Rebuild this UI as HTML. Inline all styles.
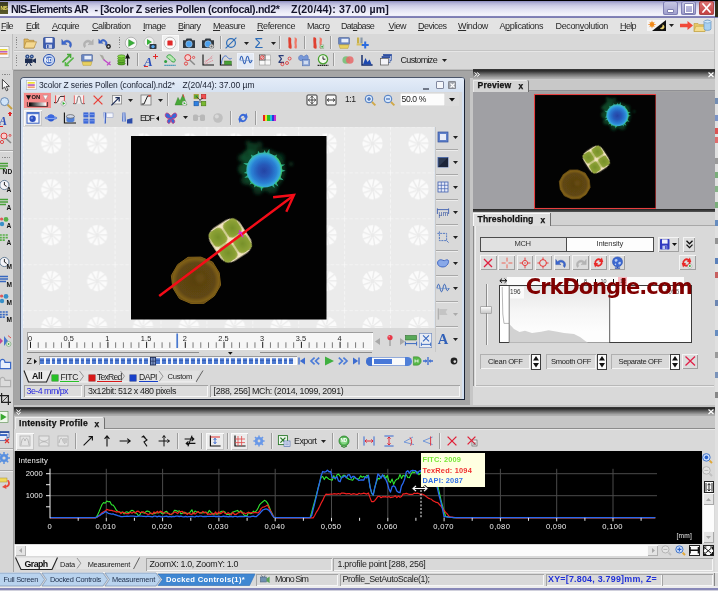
<!DOCTYPE html>
<html><head><meta charset="utf-8"><title>NIS-Elements AR</title>
<style>
html,body{margin:0;padding:0;}
body{width:718px;height:591px;overflow:hidden;position:relative;background:#d6d6d6;font-family:"Liberation Sans",sans-serif;font-size:8px;color:#222;}
.a{position:absolute;}
#w{position:absolute;left:-8px;top:-8px;width:734px;height:607px;overflow:hidden;will-change:transform;filter:blur(.42px);background:#d6d6d6;}
#v{position:absolute;left:8px;top:8px;width:718px;height:591px;}
.t{position:absolute;white-space:pre;line-height:1;}
u{text-decoration:underline;text-underline-offset:1px;}
svg{overflow:visible;}

</style></head><body><div id="w"><div id="v">
<div class="a" style="left:-8px;top:0px;width:734px;height:18px;background:linear-gradient(#000 0,#000 .9px,#8c8cc0 1px,#b4b4d8 3px,#d0d0e8 6px,#e4e4f4 10px,#f2f2fa 14px,#f0f0fa 15.6px,#8484b8 16.4px,#7c7cb2 17.6px,#c0c0d0 18px);"></div>
<div class="a" style="left:-8px;top:2px;width:16px;height:12px;background:linear-gradient(#3a3a20,#5a5a2a);"></div>
<span class="t" style="left:0.5px;top:6.27px;font-size:5px;color:#e8d860;letter-spacing:-0.448px;font-weight:bold;">NIS</span>
<span class="t" style="left:11px;top:3.53px;font-size:10.6px;color:#15152a;letter-spacing:-0.610px;font-weight:bold;">NIS-Elements AR</span>
<span class="t" style="left:94.5px;top:3.53px;font-size:10.6px;color:#15152a;letter-spacing:-0.341px;font-weight:bold;">- [3color Z series Pollen (confocal).nd2*</span>
<span class="t" style="left:291px;top:3.53px;font-size:10.6px;color:#15152a;letter-spacing:0.157px;font-weight:bold;">Z(20/44): 37.00 µm]</span>
<div class="a" style="left:663px;top:1px;width:15px;height:14px;border-radius:2.5px;background:linear-gradient(#c9c9e6,#9d9dcb);box-shadow:inset 0 0 0 1px #7f7fb4;"></div>
<div class="a" style="left:681px;top:1px;width:15px;height:14px;border-radius:2.5px;background:linear-gradient(#c9c9e6,#9d9dcb);box-shadow:inset 0 0 0 1px #7f7fb4;"></div>
<div class="a" style="left:699px;top:1px;width:15px;height:14px;border-radius:2.5px;background:linear-gradient(#e07878,#c23c3c);box-shadow:inset 0 0 0 1px #a84848;"></div>
<div class="a" style="left:668px;top:10px;width:5px;height:2px;background:#fff;box-shadow:0 0 0 .5px #55558c"></div>
<div class="a" style="left:685px;top:4px;width:6px;height:6px;border:1px solid #fff;border-top-width:2px;box-shadow:0 0 0 .5px #55558c"></div>
<svg class="a" style="left:702px;top:3px;" width="9" height="10" viewBox="0 0 9 10"><path d="M1 1L8 9M8 1L1 9" stroke="#fff" stroke-width="1.8" stroke-linecap="round"/></svg>
<div class="a" style="left:715px;top:1px;width:11px;height:16px;background:#2c2c18;"></div>
<div class="a" style="left:-8px;top:18px;width:734px;height:16px;background:#e3e3e3;"></div>
<span class="t" style="left:1px;top:21.88px;font-size:9px;color:#2a2a2a;letter-spacing:-0.629px;"><u>F</u>ile</span>
<span class="t" style="left:26px;top:21.88px;font-size:9px;color:#2a2a2a;letter-spacing:-0.629px;"><u>E</u>dit</span>
<span class="t" style="left:52px;top:21.88px;font-size:9px;color:#2a2a2a;letter-spacing:-0.502px;"><u>A</u>cquire</span>
<span class="t" style="left:92px;top:21.88px;font-size:9px;color:#2a2a2a;letter-spacing:-0.412px;"><u>C</u>alibration</span>
<span class="t" style="left:143px;top:21.88px;font-size:9px;color:#2a2a2a;letter-spacing:-0.503px;"><u>I</u>mage</span>
<span class="t" style="left:178px;top:21.88px;font-size:9px;color:#2a2a2a;letter-spacing:-0.503px;"><u>B</u>inary</span>
<span class="t" style="left:213px;top:21.88px;font-size:9px;color:#2a2a2a;letter-spacing:-0.431px;"><u>M</u>easure</span>
<span class="t" style="left:257px;top:21.88px;font-size:9px;color:#2a2a2a;letter-spacing:-0.392px;"><u>R</u>eference</span>
<span class="t" style="left:307px;top:21.88px;font-size:9px;color:#2a2a2a;letter-spacing:-0.503px;">Macr<u>o</u></span>
<span class="t" style="left:341px;top:21.88px;font-size:9px;color:#2a2a2a;letter-spacing:-0.691px;">Dat<u>a</u>base</span>
<span class="t" style="left:388.5px;top:21.88px;font-size:9px;color:#2a2a2a;letter-spacing:-0.465px;"><u>V</u>iew</span>
<span class="t" style="left:418px;top:21.88px;font-size:9px;color:#2a2a2a;letter-spacing:-0.502px;"><u>D</u>evices</span>
<span class="t" style="left:458px;top:21.88px;font-size:9px;color:#2a2a2a;letter-spacing:-0.336px;"><u>W</u>indow</span>
<span class="t" style="left:499.5px;top:21.88px;font-size:9px;color:#2a2a2a;letter-spacing:-0.419px;">A<u>p</u>plications</span>
<span class="t" style="left:555.5px;top:21.88px;font-size:9px;color:#2a2a2a;letter-spacing:-0.350px;">Decon<u>v</u>olution</span>
<span class="t" style="left:620px;top:21.88px;font-size:9px;color:#2a2a2a;letter-spacing:-0.629px;"><u>H</u>elp</span>
<svg class="a" style="left:647px;top:20px;" width="19" height="11" viewBox="0 0 19 11"><rect width="19" height="11" fill="#f4f4f4"/><path d="M19 0V11H5z" fill="#111"/><circle cx="5" cy="4.5" r="2.4" fill="#f0a020"/><path d="M5 .8v7.4M1.3 4.5h7.4M2.4 1.9l5.2 5.2M7.6 1.9L2.4 7.1" stroke="#f08020" stroke-width=".7"/><path d="M15.5 4.5a2.4 2.4 0 1 1-2.6 3.4a2.6 2.6 0 0 0 2.6-3.4z" fill="#e8d070"/></svg>
<svg class="a" style="left:669px;top:24px;" width="5" height="3" viewBox="0 0 5 3"><path d="M0 0H5L2.5 3z" fill="#222"/></svg>
<svg class="a" style="left:680px;top:21px;" width="13" height="9" viewBox="0 0 13 9"><path d="M0 2.8H7.5V0L13 4.5L7.5 9V6.2H0z" fill="#f04838"/></svg>
<svg class="a" style="left:694px;top:19px;" width="19" height="13" viewBox="0 0 19 13"><path d="M0 4.5h4l1 1.2h6V12.5H0z" fill="#e8c868" stroke="#b89838" stroke-width=".6"/><path d="M0 12.5l1.8-5.2H12l-1.2 5.2z" fill="#f4dc8c" stroke="#b89838" stroke-width=".5"/><rect x="10" y="1.2" width="7" height="10.2" rx="3.4" ry="1.6" fill="#a8d0f0" stroke="#5888b8" stroke-width=".6"/><ellipse cx="13.5" cy="2.6" rx="3.5" ry="1.4" fill="#d0e8fa" stroke="#5888b8" stroke-width=".5"/></svg>
<div class="a" style="left:-8px;top:34px;width:734px;height:36px;background:#d8d8d8;"></div>
<div class="a" style="left:14px;top:50px;width:704px;height:1px;background:#c4c4c4;"></div>
<div class="a" style="left:14px;top:51px;width:704px;height:1px;background:#e6e6e6;"></div>
<div class="a" style="left:0px;top:69px;width:718px;height:1px;background:#bdbdbd;"></div>
<div class="a" style="left:-8px;top:34px;width:21px;height:36px;background:#dcdcdc;"></div>
<div class="a" style="left:12px;top:34px;width:1px;height:36px;background:#bdbdbd;"></div>
<svg class="a" style="left:0px;top:46px;" width="10" height="12" viewBox="0 0 10 12"><rect x="-2" y=".5" width="11" height="11" fill="#fafafa" stroke="#a8a8a8" stroke-width=".7"/><rect x="0" y="3" width="7.5" height="1.6" fill="#e8d838"/><rect x="0" y="5" width="7.5" height="1.6" fill="#c060c0"/><rect x="0" y="7" width="7.5" height="1.6" fill="#e89048"/></svg>
<div class="a" style="left:16px;top:37.0px;width:1.2px;height:1.2px;background:#8a8a8a;"></div>
<div class="a" style="left:16px;top:39.4px;width:1.2px;height:1.2px;background:#8a8a8a;"></div>
<div class="a" style="left:16px;top:41.8px;width:1.2px;height:1.2px;background:#8a8a8a;"></div>
<div class="a" style="left:16px;top:44.2px;width:1.2px;height:1.2px;background:#8a8a8a;"></div>
<div class="a" style="left:16px;top:46.6px;width:1.2px;height:1.2px;background:#8a8a8a;"></div>
<div class="a" style="left:16px;top:55.0px;width:1.2px;height:1.2px;background:#8a8a8a;"></div>
<div class="a" style="left:16px;top:57.4px;width:1.2px;height:1.2px;background:#8a8a8a;"></div>
<div class="a" style="left:16px;top:59.8px;width:1.2px;height:1.2px;background:#8a8a8a;"></div>
<div class="a" style="left:16px;top:62.2px;width:1.2px;height:1.2px;background:#8a8a8a;"></div>
<div class="a" style="left:16px;top:64.6px;width:1.2px;height:1.2px;background:#8a8a8a;"></div>
<div class="a" style="left:118.5px;top:37.0px;width:1.2px;height:1.2px;background:#8a8a8a;"></div>
<div class="a" style="left:118.5px;top:39.4px;width:1.2px;height:1.2px;background:#8a8a8a;"></div>
<div class="a" style="left:118.5px;top:41.8px;width:1.2px;height:1.2px;background:#8a8a8a;"></div>
<div class="a" style="left:118.5px;top:44.2px;width:1.2px;height:1.2px;background:#8a8a8a;"></div>
<div class="a" style="left:118.5px;top:46.6px;width:1.2px;height:1.2px;background:#8a8a8a;"></div>
<svg class="a" style="left:23.0px;top:35.5px" width="14" height="14" viewBox="-7.0 -7.0 14 14"><path d="M-6 -4h4l1 1.3h5V5H-6z" fill="#e0b860" stroke="#a88030" stroke-width=".6"/><path d="M-6 5l2-6.2H6.5L4 5z" fill="#f4d890" stroke="#a88030" stroke-width=".6"/></svg>
<svg class="a" style="left:41.5px;top:35.5px" width="14" height="14" viewBox="-7.0 -7.0 14 14"><rect x="-5.5" y="-5.5" width="11" height="11" rx="1" fill="#3c5cb0" stroke="#24408c" stroke-width=".6"/><rect x="-3.5" y="-5" width="7" height="4.6" fill="#f0f0f8"/><rect x="-3" y="1.5" width="6" height="4" fill="#c8d0e8"/><rect x="-2" y="2" width="1.6" height="3" fill="#3c5cb0"/></svg>
<svg class="a" style="left:60.5px;top:35.5px" width="14" height="14" viewBox="-7.0 -7.0 14 14"><path d="M-4.5 -1.2A4.2 4.2 0 1 1 2.5 4.6L1.3 2.9A2.2 2.2 0 1 0 -2.8 .2L-1 1.6H-6.2V-3.6z" fill="#3c68d0" stroke="#2848a0" stroke-width=".4"/></svg>
<svg class="a" style="left:79.5px;top:35.5px" width="14" height="14" viewBox="-7.0 -7.0 14 14"><g transform="scale(-1,1)"><path d="M-4.5 -1.2A4.2 4.2 0 1 1 2.5 4.6L1.3 2.9A2.2 2.2 0 1 0 -2.8 .2L-1 1.6H-6.2V-3.6z" fill="#b4b4b4" stroke="#a0a0a0" stroke-width=".4"/></g></svg>
<svg class="a" style="left:98.0px;top:35.5px" width="14" height="14" viewBox="-7.0 -7.0 14 14"><g transform="translate(-1,-1) scale(.85)"><path d="M-4.5 -1.2A4.2 4.2 0 1 1 2.5 4.6L1.3 2.9A2.2 2.2 0 1 0 -2.8 .2L-1 1.6H-6.2V-3.6z" fill="#3c68d0" stroke="#2848a0" stroke-width=".4"/></g><circle cx="3.5" cy="3.5" r="2.4" fill="#222"/><circle cx="3.5" cy="3.5" r="1" fill="#ddd"/></svg>
<svg class="a" style="left:124.0px;top:35.5px" width="14" height="14" viewBox="-7.0 -7.0 14 14"><circle r="5.8" fill="#f8f8f8" stroke="#a8a8a8" stroke-width=".8"/><path d="M-2.4 -3.4L3.6 0L-2.4 3.4z" fill="#38b038" stroke="#208020" stroke-width=".4"/></svg>
<svg class="a" style="left:143.0px;top:35.5px" width="14" height="14" viewBox="-7.0 -7.0 14 14"><circle cx="-1" cy="-1" r="5" fill="#f4f4f4" stroke="#b0b0b0" stroke-width=".7"/><path d="M-3 -4L2 -1L-3 2z" fill="#38b038"/><rect x="-.5" y="1" width="7" height="5" rx=".8" fill="#303840"/><circle cx="3" cy="3.6" r="1.7" fill="#58a8f0"/></svg>
<div class="a" style="left:161.5px;top:34.5px;width:17px;height:16px;background:#f0f0f0;box-shadow:inset 0 0 0 1px #fafafa"></div>
<svg class="a" style="left:162.5px;top:35.5px" width="14" height="14" viewBox="-7.0 -7.0 14 14"><circle r="5.8" fill="#fafafa" stroke="#b4b4b4" stroke-width=".8"/><rect x="-2.6" y="-2.6" width="5.2" height="5.2" rx=".6" fill="#e02828"/></svg>
<svg class="a" style="left:181.5px;top:35.5px" width="14" height="14" viewBox="-7.0 -7.0 14 14"><path d="M-6 -2.8h2.6l1-1.8h4.8l1 1.8H6V5H-6z" fill="#303840"/><circle cy="1" r="3.2" fill="#4aa0ee" stroke="#c8d8e8" stroke-width=".5"/></svg>
<svg class="a" style="left:200.5px;top:35.5px" width="14" height="14" viewBox="-7.0 -7.0 14 14"><path d="M-6 -2.8h2.6l1-1.8h4.8l1 1.8H6V5H-6z" fill="#303840"/><circle cy="1" r="3.2" fill="#4aa0ee" stroke="#c8d8e8" stroke-width=".5"/><circle cx="3.5" cy="3.5" r="2.3" fill="#e8e8e8" stroke="#777" stroke-width=".5"/><rect x="2.5" y="2.5" width="2" height="2" fill="#666"/></svg>
<div class="a" style="left:219.5px;top:36px;width:1px;height:13px;background:#9c9c9c;"></div>
<div class="a" style="left:220.5px;top:36px;width:1px;height:13px;background:#ececec;"></div>
<svg class="a" style="left:223.5px;top:35.5px" width="14" height="14" viewBox="-7.0 -7.0 14 14"><circle r="4.4" fill="none" stroke="#2c6cb8" stroke-width="1.2"/><path d="M-5.4 5.4L5.4 -5.4" stroke="#2c6cb8" stroke-width="1.1"/></svg>
<svg class="a" style="left:243.5px;top:41.5px;" width="5" height="3" viewBox="0 0 5 3"><path d="M0 0H5L2.5 3z" fill="#222"/></svg>
<span class="t" style="left:254.5px;top:35.65px;font-size:14px;color:#2c6cb8;letter-spacing:0.344px;">Σ</span>
<svg class="a" style="left:270.5px;top:41.5px;" width="5" height="3" viewBox="0 0 5 3"><path d="M0 0H5L2.5 3z" fill="#222"/></svg>
<div class="a" style="left:279px;top:36px;width:1px;height:13px;background:#9c9c9c;"></div>
<div class="a" style="left:280px;top:36px;width:1px;height:13px;background:#ececec;"></div>
<svg class="a" style="left:286.0px;top:35.5px" width="14" height="14" viewBox="-7.0 -7.0 14 14"><path d="M-4.600 -5.600C-2.400 -5.800 -1.400 -5 -1.800 -2.600C-2.200 0 -1 2 -1.400 5.600C-3 5.800 -4.400 5.600 -4.600 4C-4 1 -5 -1 -4.600 -5.600z" fill="#e04030"/><path d="M1.400 -5.400C3.400 -5.600 4.600 -4 3.800 -1.600C3 .6 4.600 3 3.600 5.400C2.600 5.600 1.600 5.400 1.400 4.400C2.400 2 .8 0 1.600 -2.400C2 -3.600 1.600 -4.600 1.400 -5.400z" fill="#f07868"/></svg>
<div class="a" style="left:304px;top:36px;width:1px;height:13px;background:#9c9c9c;"></div>
<div class="a" style="left:305px;top:36px;width:1px;height:13px;background:#ececec;"></div>
<svg class="a" style="left:311.0px;top:35.5px" width="14" height="14" viewBox="-7.0 -7.0 14 14"><path d="M-4.600 -5.600C-2.400 -5.800 -1.400 -5 -1.800 -2.600C-2.200 0 -1 2 -1.400 5.600C-3 5.800 -4.400 5.600 -4.600 4C-4 1 -5 -1 -4.600 -5.600z" fill="#e04030"/><path d="M1.400 -5.400C3.400 -5.600 4.600 -4 3.800 -1.600C3 .6 4.600 3 3.600 5.400C2.600 5.600 1.600 5.400 1.400 4.400C2.400 2 .8 0 1.600 -2.400C2 -3.600 1.600 -4.600 1.400 -5.400z" fill="#f07868"/><rect x="2.4" y="2" width="3.4" height="3.4" fill="#f0f0f0" stroke="#70a070" stroke-width=".5"/><circle cx="4.1" cy="3.7" r="1" fill="#40a840"/></svg>
<div class="a" style="left:329.5px;top:36px;width:1px;height:13px;background:#9c9c9c;"></div>
<div class="a" style="left:330.5px;top:36px;width:1px;height:13px;background:#ececec;"></div>
<svg class="a" style="left:337.0px;top:35.5px" width="14" height="14" viewBox="-7.0 -7.0 14 14"><rect x="-5.5" y="-5.5" width="11" height="7" rx=".8" fill="#6884c0" stroke="#40588c" stroke-width=".5"/><rect x="-2.6" y="-4.2" width="7" height="3.6" fill="#e8eef8"/><path d="M-5 1.8H5L4 5.4H-4z" fill="#e8d060" stroke="#a89030" stroke-width=".4"/></svg>
<svg class="a" style="left:355.0px;top:35.5px" width="14" height="14" viewBox="-7.0 -7.0 14 14"><rect x="-5" y="-5.5" width="2.2" height="6" fill="#c8b048"/><rect x="-1.6" y="-5.5" width="2.2" height="6" fill="#8898a8"/><path d="M-5.4 .5H1v2H-5.4z" fill="#d8c060"/><path d="M3.2 -1.6v7M-.3 1.9h7" stroke="#2c6ce0" stroke-width="2"/></svg>
<svg class="a" style="left:23.0px;top:53.0px" width="14" height="14" viewBox="-7.0 -7.0 14 14"><circle cx="-2.6" cy="-3.4" r="2.1" fill="#2c4c88"/><circle cx="1.8" cy="-3.6" r="1.9" fill="#2c4c88"/><rect x="-5" y="-1.6" width="7.6" height="4.6" rx=".6" fill="#1c2c50"/><path d="M2.6 -.2L6 -1.8V3.2L2.6 1.6z" fill="#1c2c50"/><path d="M-2.4 3L-4 6M-.4 3L1.4 6" stroke="#1c2c50" stroke-width="1"/><circle cx="-2.6" cy="-3.4" r=".8" fill="#a8c0e8"/><circle cx="1.8" cy="-3.6" r=".7" fill="#a8c0e8"/></svg>
<svg class="a" style="left:41.5px;top:53.0px" width="14" height="14" viewBox="-7.0 -7.0 14 14"><circle r="5.6" fill="#c8d8f4" stroke="#3458b0" stroke-width="1"/><circle r="3.4" fill="#4870c8"/></svg>
<span class="t" style="left:44.6px;top:57.66px;font-size:5.6px;color:#fff;letter-spacing:-0.047px;font-weight:bold;">ND</span>
<svg class="a" style="left:60.5px;top:53.0px" width="14" height="14" viewBox="-7.0 -7.0 14 14"><path d="M-5.600 2.400L2.400 -5.400M-1 -5.600H2.600V-2" stroke="#48a838" stroke-width="1.500" fill="none"/><path d="M5.600 -2.400L-2.400 5.400M1 5.600H-2.600V2" stroke="#58b848" stroke-width="1.500" fill="none"/></svg>
<svg class="a" style="left:79.5px;top:53.0px" width="14" height="14" viewBox="-7.0 -7.0 14 14"><rect x="-5.5" y="-5.5" width="11" height="7" rx=".8" fill="#6884c0" stroke="#40588c" stroke-width=".5"/><rect x="-2.6" y="-4.2" width="7" height="3.6" fill="#e8eef8"/><path d="M-5 1.8H5L4 5.4H-4z" fill="#e8d060" stroke="#a89030" stroke-width=".4"/></svg>
<svg class="a" style="left:98.0px;top:53.0px" width="14" height="14" viewBox="-7.0 -7.0 14 14"><path d="M-5.5 -5.5L-2 -4.4L0 .4L-2.4 -.6z" fill="#a8a8a0"/><path d="M-1.6 -.6L5.6 5M2 5.4L5.4 1.6" stroke="#c048c8" stroke-width="1.3"/></svg>
<svg class="a" style="left:115.5px;top:53.0px" width="14" height="14" viewBox="-7.0 -7.0 14 14"><ellipse cx="-1.6" cy="3.4" rx="3.8" ry="1.6" fill="#58a828" stroke="#2c6810" stroke-width=".5"/><ellipse cx="-1.6" cy="1" rx="3.8" ry="1.6" fill="#68b830" stroke="#2c6810" stroke-width=".5"/><ellipse cx="-1.6" cy="-1.4" rx="3.8" ry="1.6" fill="#78c838" stroke="#2c6810" stroke-width=".5"/><ellipse cx="-1.6" cy="-3.6" rx="3.8" ry="1.6" fill="#88d848" stroke="#2c6810" stroke-width=".5"/><path d="M4.6 5.4V-3M3 -2L4.6 -5.4L6.2 -2z" stroke="#111" stroke-width="1.1" fill="#111"/></svg>
<div class="a" style="left:137px;top:53px;width:1px;height:13px;background:#9c9c9c;"></div>
<div class="a" style="left:138px;top:53px;width:1px;height:13px;background:#ececec;"></div>
<span class="t" style="left:144px;top:54.60px;font-size:13px;color:#2c50b8;font-weight:bold;font-family:'Liberation Serif',serif;font-style:italic;">A</span>
<div class="a" style="left:153px;top:54px;width:5px;height:5px;"><div class="a" style="left:0;top:2px;width:5px;height:1.4px;background:#e02828"></div><div class="a" style="left:1.8px;top:0;width:1.4px;height:5px;background:#e02828"></div></div>
<div class="a" style="left:144px;top:66px;width:4px;height:1.4px;background:#e02828;"></div>
<svg class="a" style="left:162.5px;top:53.0px" width="14" height="14" viewBox="-7.0 -7.0 14 14"><path d="M-1.6 -5C1 -6 2.4 -3 4 -1.6C6 -.4 5.6 2.4 3 2C1 1.6 .4 -.6 -1.6 -1.4C-3.6 -2.4 -3.6 -4.4 -1.6 -5z" fill="#b8e8b0" stroke="#30a040" stroke-width="1"/><circle cx="-4.4" cy="1.6" r="1.5" fill="#30a040"/><path d="M-5.6 5.4H5.6" stroke="#3090b0" stroke-width="1.3" stroke-dasharray="1.4 .6"/></svg>
<svg class="a" style="left:181.5px;top:53.0px" width="14" height="14" viewBox="-7.0 -7.0 14 14"><circle cx="-1.2" cy="-2.4" r="3" fill="#f8d0d0" stroke="#e03838" stroke-width="1"/><circle cx="-3" cy="3.6" r="1.6" fill="none" stroke="#e03838" stroke-width=".9"/><circle cx="4.6" cy="-2.6" r="1.1" fill="none" stroke="#e03838" stroke-width=".8"/><path d="M.8 0L5.8 4.8" stroke="#888" stroke-width="1.5"/></svg>
<svg class="a" style="left:200.5px;top:53.0px" width="14" height="14" viewBox="-7.0 -7.0 14 14"><path d="M-5 -5.6V5H6" stroke="#111" stroke-width="1.1" fill="none"/><path d="M-3.4 3.4L4.6 -4.4M-3.4 1.4L4.6 -2.2M-2.6 4L5 .4" stroke="#e07080" stroke-width=".7" stroke-dasharray="1.2 .6"/></svg>
<svg class="a" style="left:219.0px;top:53.0px" width="14" height="14" viewBox="-7.0 -7.0 14 14"><path d="M-5.6 -5.6V5H6" stroke="#111" stroke-width="1.1" fill="none"/><path d="M-4.8 4C-3.6 -4 -.6 -6 1.8 -2.4C3.2 -.4 4.6 -1 5.6 -1.6" stroke="#3868c8" stroke-width=".9" fill="none"/><rect x="-1.6" y="1" width="7" height="3.6" fill="#48a038" stroke="#286018" stroke-width=".4"/></svg>
<div class="a" style="left:237px;top:52.5px;width:17px;height:16px;background:#e4eaf4;box-shadow:inset 0 0 0 1px #eef2fa"></div>
<svg class="a" style="left:238.5px;top:53.0px" width="14" height="14" viewBox="-7.0 -7.0 14 14"><path d="M-6 0C-5 -5 -4 -5 -3 0C-2 5 -1 5 0 0C1 -5 2 -5 3 0C4 4 5 3 6 0" stroke="#3060b8" stroke-width="1.1" fill="none"/><path d="M-6.4 .6H6.4" stroke="#6088c8" stroke-width=".6"/></svg>
<svg class="a" style="left:258.0px;top:53.0px" width="14" height="14" viewBox="-7.0 -7.0 14 14"><rect x="-5.6" y="-5" width="11.2" height="10" fill="#f8f8f8" stroke="#888" stroke-width=".5"/><path d="M0 -5V5M-5.6 0H5.6" stroke="#888" stroke-width=".6"/><rect x="-5.6" y="-5" width="5.6" height="5" fill="#e8e8e8" stroke="#333" stroke-width=".6"/><circle cx="-2.8" cy="-2.5" r="1.8" fill="none" stroke="#e02828" stroke-width=".8"/><path d="M-4.6 -.6L-1 -4.4" stroke="#e02828" stroke-width=".7"/></svg>
<span class="t" style="left:278px;top:54.11px;font-size:10.5px;color:#283c78;font-weight:bold;">Σ</span>
<svg class="a" style="left:277.5px;top:53.0px" width="14" height="14" viewBox="-7.0 -7.0 14 14"><circle cx="-2.6" cy="4.2" r="1.5" fill="none" stroke="#e03030" stroke-width=".8"/><circle cx="2" cy="3" r="1.5" fill="none" stroke="#e03030" stroke-width=".8"/><circle cx="4.6" cy="-1.4" r="1.5" fill="none" stroke="#e03030" stroke-width=".8"/></svg>
<svg class="a" style="left:296.5px;top:53.0px" width="14" height="14" viewBox="-7.0 -7.0 14 14"><path d="M-5.4 -2.6C-4.6 -5.6 -1 -5 -.6 -3.2C.6 -3.4 1.4 -4.8 2.8 -5.2C4.6 -4.4 4.6 -1 3.8 .6H-1.4C-3.4 1 -5.8 .4 -5.4 -2.6z" fill="#7898d8" stroke="#4868b0" stroke-width=".5"/><rect x="-1.6" y="-.6" width="7" height="6.4" fill="#90a8d8" stroke="#5070b0" stroke-width=".6"/><rect x="-.2" y="1" width="4.2" height="3.2" fill="#d0dcf0"/></svg>
<svg class="a" style="left:315.5px;top:53.0px" width="14" height="14" viewBox="-7.0 -7.0 14 14"><circle cy="-.8" r="4.6" fill="#f4f8f0" stroke="#48a030" stroke-width="1.3"/><path d="M0 -.8V-3.6M0 -.8L2.4 -.8" stroke="#111" stroke-width=".9"/><path d="M-5.4 5.4H5.4" stroke="#222" stroke-width="1.2" stroke-dasharray="1.5 .5"/></svg>
<div class="a" style="left:333px;top:53px;width:1px;height:13px;background:#9c9c9c;"></div>
<div class="a" style="left:334px;top:53px;width:1px;height:13px;background:#ececec;"></div>
<svg class="a" style="left:340.5px;top:53.0px" width="14" height="14" viewBox="-7.0 -7.0 14 14"><circle cx="-1.8" r="3.8" fill="#78c078" opacity=".9"/><circle cx="1.8" r="3.8" fill="#e86868" opacity=".85"/></svg>
<svg class="a" style="left:360.0px;top:53.0px" width="14" height="14" viewBox="-7.0 -7.0 14 14"><path d="M-5 -5V5H5.6" stroke="#102868" stroke-width="1.4" fill="none"/><path d="M-4 4.4L-1.6 -2L.6 2L2.6 -.6L4.6 4.4z" fill="#1c48b0"/></svg>
<svg class="a" style="left:379.0px;top:53.0px" width="14" height="14" viewBox="-7.0 -7.0 14 14"><rect x="-2.4" y="-5.6" width="8" height="6" fill="#e8ecf8" stroke="#3050a0" stroke-width=".7"/><rect x="-2.4" y="-5.6" width="8" height="1.6" fill="#3050a0"/><rect x="-4" y="-3.6" width="8" height="6" fill="#e8ecf8" stroke="#3050a0" stroke-width=".7"/><rect x="-4" y="-3.6" width="8" height="1.6" fill="#3050a0"/><rect x="-5.6" y="-1.4" width="8" height="6.4" fill="#f4f4f8" stroke="#555" stroke-width=".7"/></svg>
<span class="t" style="left:400.5px;top:55.98px;font-size:9px;color:#1c1c1c;letter-spacing:-0.668px;">Customize</span>
<svg class="a" style="left:441.5px;top:59px;" width="5" height="3" viewBox="0 0 5 3"><path d="M0 0H5L2.5 3z" fill="#222"/></svg>
<div class="a" style="left:-8px;top:70px;width:734px;height:502px;background:#a5a5a5;"></div>
<div class="a" style="left:13px;top:69.5px;width:705px;height:1px;background:#8f8f8f;"></div>
<div class="a" style="left:-8px;top:70px;width:21px;height:502px;background:#d6d6d6;"></div>
<div class="a" style="left:13px;top:70px;width:1px;height:502px;background:#a2a2a2;"></div>
<div class="a" style="left:2.0px;top:73.5px;width:1.2px;height:1.2px;background:#8a8a8a;"></div>
<div class="a" style="left:4.4px;top:73.5px;width:1.2px;height:1.2px;background:#8a8a8a;"></div>
<div class="a" style="left:6.8px;top:73.5px;width:1.2px;height:1.2px;background:#8a8a8a;"></div>
<div class="a" style="left:9.2px;top:73.5px;width:1.2px;height:1.2px;background:#8a8a8a;"></div>
<svg class="a" style="left:-1.0px;top:78.0px" width="14" height="14" viewBox="-7.0 -7.0 14 14"><path d="M-3.6 -5.6V4L-1.4 2L.4 5.8L2 5L.2 1.4H3.4z" fill="#f8f8f8" stroke="#222" stroke-width=".8"/></svg>
<svg class="a" style="left:-1.5px;top:96.0px" width="14" height="14" viewBox="-7.0 -7.0 14 14"><circle cx="-1.4" cy="-1.4" r="4" fill="#d0e4f8" stroke="#6888b0" stroke-width="1"/><path d="M1.6 1.8L6 6" stroke="#c8a040" stroke-width="2"/></svg>
<span class="t" style="left:-1px;top:114.84px;font-size:12px;color:#2c50b8;font-weight:bold;font-family:'Liberation Serif',serif;font-style:italic;">A</span>
<div class="a" style="left:8px;top:113px;width:4px;height:1.2px;background:#e02828;"></div>
<div class="a" style="left:9.4px;top:111.6px;width:1.2px;height:4px;background:#e02828;"></div>
<div class="a" style="left:-1px;top:126px;width:4px;height:1.3px;background:#e02828;"></div>
<svg class="a" style="left:-2.0px;top:131.0px" width="14" height="14" viewBox="-7.0 -7.0 14 14"><circle cx="-1" cy="-2" r="3" fill="#f8d0d0" stroke="#e03838" stroke-width="1"/><circle cx="-3" cy="4" r="1.6" fill="none" stroke="#e03838" stroke-width=".9"/><circle cx="5" cy="-2.6" r="1" fill="none" stroke="#e03838" stroke-width=".8"/><path d="M1 .4L6 5" stroke="#888" stroke-width="1.5"/></svg>
<div class="a" style="left:0px;top:150px;width:13px;height:1px;background:#a8a8a8;"></div>
<div class="a" style="left:0px;top:151px;width:13px;height:1px;background:#ececec;"></div>
<div class="a" style="left:2.0px;top:157px;width:1.2px;height:1.2px;background:#8a8a8a;"></div>
<div class="a" style="left:4.4px;top:157px;width:1.2px;height:1.2px;background:#8a8a8a;"></div>
<div class="a" style="left:6.8px;top:157px;width:1.2px;height:1.2px;background:#8a8a8a;"></div>
<div class="a" style="left:9.2px;top:157px;width:1.2px;height:1.2px;background:#8a8a8a;"></div>
<svg class="a" style="left:-2.5px;top:161.0px" width="14" height="14" viewBox="-7.0 -7.0 14 14"><path d="M-5 -4.6H3M-5 -2H3M-5 .6H1" stroke="#48a038" stroke-width="1.5"/></svg>
<span class="t" style="left:6.6px;top:168.81px;font-size:6.6px;color:#111;font-weight:bold;"></span>
<span class="t" style="left:2.6px;top:169.01px;font-size:6.6px;color:#111;letter-spacing:0.234px;font-weight:bold;">ND</span>
<div class="a" style="left:0px;top:160.5px;width:11px;height:7px;background:#58a848;opacity:.0"></div>
<svg class="a" style="left:-2.5px;top:179.0px" width="14" height="14" viewBox="-7.0 -7.0 14 14"><circle cx="-.6" cy="-1" r="4.6" fill="#f4f4f8" stroke="#688098" stroke-width="1"/><path d="M-.6 -1V-4M-.6 -1L1.6 .4" stroke="#111" stroke-width=".9"/></svg>
<span class="t" style="left:6.6px;top:186.81px;font-size:6.6px;color:#111;font-weight:bold;">A</span>
<svg class="a" style="left:-2.5px;top:197.0px" width="14" height="14" viewBox="-7.0 -7.0 14 14"><path d="M-5 -4.6H3M-5 -2H3M-5 .6H1" stroke="#48a038" stroke-width="1.5"/></svg>
<span class="t" style="left:6.6px;top:204.81px;font-size:6.6px;color:#111;font-weight:bold;">A</span>
<svg class="a" style="left:-2.5px;top:215.0px" width="14" height="14" viewBox="-7.0 -7.0 14 14"><circle cx="-3" cy="2" r="2.2" fill="#3890c8"/><circle cx="1" cy="-2.6" r="2.4" fill="#58b048"/><circle cx="-3.4" cy="-3" r="1.6" fill="#e05858"/></svg>
<span class="t" style="left:6.6px;top:222.81px;font-size:6.6px;color:#111;font-weight:bold;">A</span>
<svg class="a" style="left:-2.5px;top:232.0px" width="14" height="14" viewBox="-7.0 -7.0 14 14"><path d="M-5.4 -4H3.4M-5.4 -1.4H3.4M-5.4 1.2H.6" stroke="#58b048" stroke-width="1.7" stroke-dasharray="2.2 .8"/></svg>
<span class="t" style="left:6.6px;top:239.81px;font-size:6.6px;color:#111;font-weight:bold;">A</span>
<svg class="a" style="left:-2.5px;top:256.0px" width="14" height="14" viewBox="-7.0 -7.0 14 14"><circle cx="-.6" cy="-1" r="4.6" fill="#f4f4f8" stroke="#688098" stroke-width="1"/><path d="M-.6 -1V-4M-.6 -1L1.6 .4" stroke="#111" stroke-width=".9"/></svg>
<span class="t" style="left:6.6px;top:263.81px;font-size:6.6px;color:#111;font-weight:bold;">M</span>
<svg class="a" style="left:-2.5px;top:274.0px" width="14" height="14" viewBox="-7.0 -7.0 14 14"><path d="M-5 -4.6H3M-5 -2H3M-5 .6H1" stroke="#3868c0" stroke-width="1.5"/></svg>
<span class="t" style="left:6.6px;top:281.81px;font-size:6.6px;color:#111;font-weight:bold;">M</span>
<svg class="a" style="left:-2.5px;top:292.0px" width="14" height="14" viewBox="-7.0 -7.0 14 14"><circle cx="-3" cy="2" r="2.2" fill="#3890c8"/><circle cx="1" cy="-2.6" r="2.4" fill="#3890c8"/><circle cx="-3.4" cy="-3" r="1.6" fill="#e05858"/></svg>
<span class="t" style="left:6.6px;top:299.81px;font-size:6.6px;color:#111;font-weight:bold;">M</span>
<svg class="a" style="left:-2.5px;top:309.0px" width="14" height="14" viewBox="-7.0 -7.0 14 14"><path d="M-5.4 -4H3.4M-5.4 -1.4H3.4M-5.4 1.2H.6" stroke="#3868c0" stroke-width="1.7" stroke-dasharray="2.2 .8"/></svg>
<span class="t" style="left:6.6px;top:316.81px;font-size:6.6px;color:#111;font-weight:bold;">M</span>
<svg class="a" style="left:-2.0px;top:334.0px" width="14" height="14" viewBox="-7.0 -7.0 14 14"><path d="M-6 -4L-2 0L-6 4z" fill="#c04898"/><path d="M-1 -5L3 0L-1 5z" fill="#4878d0"/><circle cx="3.6" cy="3" r="2.4" fill="#f0f0f0" stroke="#60a060" stroke-width=".6"/><path d="M2.8 1.8L5 3L2.8 4.2z" fill="#38a838"/><path d="M3 -5.4L6 -3" stroke="#e05050" stroke-width="1"/></svg>
<svg class="a" style="left:-2.0px;top:357.0px" width="14" height="14" viewBox="-7.0 -7.0 14 14"><path d="M-5 -1.6C-5 -5.6 0 -5.6 0 -1.6H5.6V4.6H-5z" fill="#e8f0fc" stroke="#3868c8" stroke-width="1.2"/></svg>
<svg class="a" style="left:-2.0px;top:375.0px" width="14" height="14" viewBox="-7.0 -7.0 14 14"><path d="M-5 -1.6C-5 -5.6 0 -5.6 0 -1.6H5.6V4.6H-5z" fill="#dcdcdc" stroke="#b0b0b0" stroke-width="1.2"/></svg>
<svg class="a" style="left:-2.0px;top:392.0px" width="14" height="14" viewBox="-7.0 -7.0 14 14"><path d="M-3.4 -6V3.4H6M-6 -3.4H3.4V6" stroke="#222" stroke-width="1.2" fill="none"/><path d="M-3 3L3 -3" stroke="#222" stroke-width=".8"/></svg>
<svg class="a" style="left:-3.0px;top:410.0px" width="14" height="14" viewBox="-7.0 -7.0 14 14"><rect x="-6" y="-5.6" width="10" height="11.2" fill="#f0f8ec" stroke="#689860" stroke-width=".7"/><path d="M-3.4 -3.6L2.6 0L-3.4 3.6z" fill="#38a830"/></svg>
<svg class="a" style="left:-3.0px;top:430.0px" width="14" height="14" viewBox="-7.0 -7.0 14 14"><rect x="-4" y="-5.6" width="9" height="6" fill="#e8ecf8" stroke="#3050a0" stroke-width=".7"/><rect x="-4" y="-5.6" width="9" height="1.6" fill="#3050a0"/><rect x="-6" y="-2.6" width="9" height="6" fill="#e8ecf8" stroke="#3050a0" stroke-width=".7"/><rect x="-6" y="-2.6" width="9" height="1.6" fill="#3868c8"/><path d="M1 2L5 6M5 2L1 6" stroke="#e03030" stroke-width="1.1"/></svg>
<div class="a" style="left:0px;top:448px;width:13px;height:1px;background:#a8a8a8;"></div>
<div class="a" style="left:0px;top:449px;width:13px;height:1px;background:#ececec;"></div>
<svg class="a" style="left:-3.5px;top:451.0px" width="14" height="14" viewBox="-7.0 -7.0 14 14"><circle r="3" fill="none" stroke="#5890e0" stroke-width="2.2"/><path d="M0 -6V6M-6 0H6M-4.2 -4.2L4.2 4.2M4.2 -4.2L-4.2 4.2" stroke="#5890e0" stroke-width="1.5"/><circle r="1.6" fill="#d6d6d6"/></svg>
<div class="a" style="left:0px;top:470px;width:13px;height:1px;background:#a8a8a8;"></div>
<div class="a" style="left:0px;top:471px;width:13px;height:1px;background:#ececec;"></div>
<svg class="a" style="left:-2.0px;top:476.0px" width="14" height="14" viewBox="-7.0 -7.0 14 14"><rect x="-6" y="-5" width="8" height="4" fill="#f0d858" stroke="#a89030" stroke-width=".5"/><path d="M3.6 -3C6 0 5 4 1 4.6L1.6 6L-3 4L1 1.2L1.2 2.8C3.6 2 3.6 -.6 2 -2.4z" fill="#e84838"/></svg>
<div class="a" style="left:715px;top:70px;width:11px;height:502px;background:#e0e0e0;"></div>
<div class="a" style="left:715px;top:18px;width:11px;height:52px;background:#e4e4e4;"></div>
<div class="a" style="left:714px;top:18px;width:1px;height:52px;background:#c0c0c0;"></div>
<div class="a" style="left:715px;top:98px;width:3px;height:6px;background:#5878a8;opacity:.8"></div>
<div class="a" style="left:715px;top:115px;width:3px;height:6px;background:#6080c0;opacity:.8"></div>
<div class="a" style="left:715px;top:128px;width:3px;height:6px;background:#d83030;opacity:.8"></div>
<div class="a" style="left:715px;top:137px;width:3px;height:6px;background:#e05050;opacity:.8"></div>
<div class="a" style="left:715px;top:158px;width:3px;height:6px;background:#888;opacity:.8"></div>
<div class="a" style="left:715px;top:172px;width:3px;height:6px;background:#60a060;opacity:.8"></div>
<div class="a" style="left:715px;top:186px;width:3px;height:6px;background:#70a870;opacity:.8"></div>
<div class="a" style="left:715px;top:202px;width:3px;height:6px;background:#60a060;opacity:.8"></div>
<div class="a" style="left:715px;top:220px;width:3px;height:6px;background:#4878b8;opacity:.8"></div>
<div class="a" style="left:715px;top:238px;width:3px;height:6px;background:#808080;opacity:.8"></div>
<div class="a" style="left:715px;top:258px;width:3px;height:6px;background:#3868b0;opacity:.8"></div>
<div class="a" style="left:715px;top:272px;width:3px;height:6px;background:#c04040;opacity:.8"></div>
<div class="a" style="left:715px;top:300px;width:3px;height:6px;background:#5070a8;opacity:.8"></div>
<div class="a" style="left:715px;top:330px;width:3px;height:6px;background:#4878b8;opacity:.8"></div>
<div class="a" style="left:715px;top:352px;width:3px;height:6px;background:#888;opacity:.8"></div>
<div class="a" style="left:715px;top:372px;width:3px;height:6px;background:#6080b0;opacity:.8"></div>
<div class="a" style="left:715px;top:392px;width:3px;height:6px;background:#707070;opacity:.8"></div>
<div class="a" style="left:20px;top:76.5px;width:444.5px;height:323.2px;background:#d3e0f2;border-radius:4px 4px 0 0;box-shadow:inset 1px 1px 0 #4a5468, inset -1px -1px 0 #1a2234;"></div>
<div class="a" style="left:21px;top:77.5px;width:442.5px;height:14px;background:linear-gradient(#e4ecf8,#d6e2f2);border-radius:3px 3px 0 0;"></div>
<svg class="a" style="left:25.5px;top:79.5px;" width="10.5" height="10" viewBox="0 0 10.5 10"><rect x=".3" y=".3" width="9.9" height="9.4" fill="#fcfcfc" stroke="#a8b0b8" stroke-width=".6"/><rect x="1.6" y="2" width="7.2" height="1.7" fill="#f0e030"/><rect x="1.6" y="4.2" width="7.2" height="1.7" fill="#b860c0"/><rect x="1.6" y="6.4" width="7.2" height="1.7" fill="#f0a070"/></svg>
<span class="t" style="left:39px;top:81.10px;font-size:8.5px;color:#1a2030;letter-spacing:-0.139px;">3color Z series Pollen (confocal).nd2*</span>
<span class="t" style="left:182.5px;top:81.10px;font-size:8.5px;color:#1a2030;letter-spacing:-0.026px;">Z(20/44): 37.00 µm</span>
<div class="a" style="left:423px;top:87.5px;width:6px;height:2px;background:#707888;"></div>
<div class="a" style="left:435.5px;top:81px;width:6px;height:6px;border:1px solid #8088a0;border-top-width:1.6px;background:#f4f6fa;border-radius:1px"></div>
<div class="a" style="left:448px;top:81px;width:8px;height:8px;background:#a0a4ac;border-radius:1.5px;box-shadow:inset 0 0 0 .8px #80848c"></div>
<svg class="a" style="left:449.5px;top:82.5px;" width="5" height="5" viewBox="0 0 5 5"><path d="M.5 .5L4.5 4.5M4.5 .5L.5 4.5" stroke="#fff" stroke-width="1.2"/></svg>
<div class="a" style="left:23px;top:91.5px;width:439px;height:35px;background:#d9d9d9;"></div>
<div class="a" style="left:23.5px;top:92.5px;width:27px;height:15px;background:#f58a8a;"></div>
<svg class="a" style="left:23.5px;top:92.5px;" width="27" height="15" viewBox="0 0 27 15"><path d="M2 2.2H7L4.5 7z" fill="#111"/><path d="M19 2.2H24L21.5 7z" fill="#fff" stroke="#888" stroke-width=".4"/><rect x="5" y="9.4" width="17" height="3.6" fill="url(#ongr)"/><path d="M3.4 9V13.4H23.6V9" stroke="#111" stroke-width=".7" fill="none"/><defs><linearGradient id="ongr"><stop offset="0" stop-color="#000"/><stop offset="1" stop-color="#fff"/></linearGradient></defs></svg>
<span class="t" style="left:31.5px;top:95.29px;font-size:5.8px;color:#111;letter-spacing:-0.102px;font-weight:bold;">ON</span>
<svg class="a" style="left:53.0px;top:92.6px" width="14" height="14" viewBox="-7.0 -7.0 14 14"><rect x="-4.6" y="-5" width="9.2" height="8" fill="#f4e4e4"/><path d="M-6 2.6H-3.6C-1.6 2.6 -1.6 -3.6 1 -3.6H5" stroke="#111" stroke-width=".9" fill="none"/><path d="M-4.4 -4.6V3.4M4.4 -4.6V3.4" stroke="#e83838" stroke-width=".9"/><circle cx="3.6" cy="3.4" r="2.6" fill="#f4f4f4" stroke="#888" stroke-width=".5"/><path d="M2.6 1.8L5.2 3.4L2.6 5z" fill="#28a828"/></svg>
<svg class="a" style="left:71.5px;top:92.6px" width="14" height="14" viewBox="-7.0 -7.0 14 14"><rect x="-4.6" y="-5" width="9.2" height="8" fill="#f4e4e4"/><path d="M-5.6 3.6H-3C-1.6 3.6 -2 -4 0 -4C2 -4 1.6 3.6 3 3.6H5.6" stroke="#111" stroke-width=".9" fill="none"/><path d="M-4.6 -4.6V4M4.6 -4.6V4" stroke="#e83838" stroke-width=".9"/><rect x="-4.6" y="-5" width="9.2" height="9" fill="#fff" opacity=".35"/></svg>
<svg class="a" style="left:90.5px;top:92.6px" width="14" height="14" viewBox="-7.0 -7.0 14 14"><path d="M-4.4 -4.4L4.4 4.4M4.4 -4.4L-4.4 4.4" stroke="#e84038" stroke-width="1.3"/></svg>
<svg class="a" style="left:110.0px;top:92.6px" width="14" height="14" viewBox="-7.0 -7.0 14 14"><rect x="-4.6" y="-4.6" width="9.2" height="8.6" fill="#f4f4f4" stroke="#888" stroke-width=".8"/><path d="M-5.6 5.4L1.6 -1.8M-1.6 -2.4H2.2V1.4" stroke="#1c2c58" stroke-width="1.2" fill="none"/></svg>
<svg class="a" style="left:128px;top:98.5px;" width="5" height="3" viewBox="0 0 5 3"><path d="M0 0H5L2.5 3z" fill="#222"/></svg>
<svg class="a" style="left:138.5px;top:92.6px" width="14" height="14" viewBox="-7.0 -7.0 14 14"><rect x="-5" y="-5" width="10" height="10" fill="#f0f0f0" stroke="#777" stroke-width=".8"/><path d="M-4.4 4H-2L1.6 -4H4.6" stroke="#222" stroke-width="1" fill="none"/><path d="M2.4 -4.2H4.6" stroke="#e84838" stroke-width="1.4"/></svg>
<svg class="a" style="left:157.5px;top:98.5px;" width="5" height="3" viewBox="0 0 5 3"><path d="M0 0H5L2.5 3z" fill="#222"/></svg>
<div class="a" style="left:167px;top:93px;width:1px;height:13px;background:#9c9c9c;"></div>
<div class="a" style="left:168px;top:93px;width:1px;height:13px;background:#ececec;"></div>
<svg class="a" style="left:174.0px;top:92.6px" width="14" height="14" viewBox="-7.0 -7.0 14 14"><path d="M-6 5L-3 -2.6L-1 1L2 -5.6L6 5z" fill="#48a838" stroke="#287818" stroke-width=".4"/><path d="M2 -5.6L3 -2.6" stroke="#e04040" stroke-width="1"/><circle cx="3.4" cy="3.2" r="2.3" fill="#f0f0f0" stroke="#888" stroke-width=".4"/><path d="M2.6 2L4.8 3.2L2.6 4.4z" fill="#28a828"/></svg>
<svg class="a" style="left:193.0px;top:92.6px" width="14" height="14" viewBox="-7.0 -7.0 14 14"><rect x="-6" y="-5.6" width="4.4" height="4.4" fill="#58a838" stroke="#b89020" stroke-width=".6"/><rect x="1.4" y="-5.6" width="4.4" height="4.4" fill="#f05050" stroke="#c02020" stroke-width=".6"/><rect x="-6" y="1.4" width="4.4" height="4.4" fill="#3080e0" stroke="#1050a0" stroke-width=".6"/><rect x="1.4" y="1.4" width="4.4" height="4.4" fill="#78b830" stroke="#487810" stroke-width=".6"/><path d="M-3.6 -3.4L0 0V3M0 0L3 -2" stroke="#222" stroke-width=".7" fill="none"/></svg>
<svg class="a" style="left:305.0px;top:92.6px" width="14" height="14" viewBox="-7.0 -7.0 14 14"><rect x="-5" y="-5" width="10" height="10" rx="1" fill="#f8f8f8" stroke="#222" stroke-width=".9"/><path d="M0 -3.6V3.6M-3.6 0H3.6M-1.4 -2.2L0 -3.8L1.4 -2.2M-1.4 2.2L0 3.8L1.4 2.2M-2.2 -1.4L-3.8 0L-2.2 1.4M2.2 -1.4L3.8 0L2.2 1.4" stroke="#222" stroke-width=".8" fill="none"/></svg>
<svg class="a" style="left:324.0px;top:92.6px" width="14" height="14" viewBox="-7.0 -7.0 14 14"><rect x="-5" y="-5" width="10" height="10" rx="1" fill="#f8f8f8" stroke="#222" stroke-width=".9"/><path d="M-3.6 0H3.6M-2 -1.6L-3.8 0L-2 1.6M2 -1.6L3.8 0L2 1.6" stroke="#222" stroke-width=".9" fill="none"/></svg>
<span class="t" style="left:345px;top:95.12px;font-size:8.6px;color:#222;letter-spacing:-0.484px;">1:1</span>
<svg class="a" style="left:362.5px;top:92.6px" width="14" height="14" viewBox="-7.0 -7.0 14 14"><circle cx="-1" cy="-1" r="3.8" fill="#d8e8fc" stroke="#4878c0" stroke-width="1"/><path d="M2 2L5.4 5.4" stroke="#d0a848" stroke-width="1.8"/><path d="M-3 -1H1" stroke="#2858a8" stroke-width="1"/><path d="M-1 -3V1" stroke="#2858a8" stroke-width="1"/></svg>
<svg class="a" style="left:381.5px;top:92.6px" width="14" height="14" viewBox="-7.0 -7.0 14 14"><circle cx="-1" cy="-1" r="3.8" fill="#d8e8fc" stroke="#4878c0" stroke-width="1"/><path d="M2 2L5.4 5.4" stroke="#d0a848" stroke-width="1.8"/><path d="M-3 -1H1" stroke="#2858a8" stroke-width="1"/></svg>
<div class="a" style="left:399.5px;top:93px;width:45px;height:13px;background:#fcfcfc;box-shadow:inset 0 0 0 .5px #d0d0d0"></div>
<span class="t" style="left:401.5px;top:95.12px;font-size:8.6px;color:#222;letter-spacing:-0.378px;">50.0 %</span>
<div class="a" style="left:445px;top:93px;width:14px;height:13px;background:#dcdcdc;"></div>
<svg class="a" style="left:448.5px;top:98px;" width="6" height="3.5" viewBox="0 0 6 3.5"><path d="M0 0H6L3 3.5z" fill="#111"/></svg>
<div class="a" style="left:23.5px;top:109.5px;width:18px;height:16.5px;background:#ececec;box-shadow:inset 1px 1px 0 #fafafa, inset -1px -1px 0 #c8c8c8"></div>
<svg class="a" style="left:25.5px;top:110.5px" width="14" height="14" viewBox="-7.0 -7.0 14 14"><rect x="-6" y="-5.4" width="12" height="10.6" fill="#f4f6fc" stroke="#3860c0" stroke-width="1"/><rect x="-6" y="-5.4" width="12" height="1.6" fill="#5078d0"/><circle cx="-.4" cy=".8" r="3.2" fill="#2c50c0"/><circle cx="-1.2" cy="0" r="1.2" fill="#6c8ce0"/></svg>
<svg class="a" style="left:44.0px;top:110.5px" width="14" height="14" viewBox="-7.0 -7.0 14 14"><circle r="3.4" fill="#2c58d0"/><ellipse rx="6" ry="1.5" fill="#88a8f0" stroke="#2c58d0" stroke-width=".6"/><path d="M-3.4 0A3.4 3.4 0 0 1 3.4 0z" fill="#3c68e0"/></svg>
<svg class="a" style="left:63.0px;top:110.5px" width="14" height="14" viewBox="-7.0 -7.0 14 14"><path d="M-5.6 -5.6V5H6" stroke="#111" stroke-width="1.1" fill="none"/><path d="M-3.6 -1.6V2.4A4 1.8 0 0 0 4.4 2.4V-1.6z" fill="#5080d8"/><ellipse cx=".4" cy="-1.6" rx="4" ry="1.8" fill="#d0d8e8" stroke="#444" stroke-width=".6"/></svg>
<svg class="a" style="left:82.0px;top:110.5px" width="14" height="14" viewBox="-7.0 -7.0 14 14"><rect x="-5.6" y="-5.6" width="5" height="5" fill="#3c68d8"/><rect x=".6" y="-5.6" width="5" height="5" fill="#3c68d8"/><rect x="-5.6" y=".6" width="5" height="5" fill="#3c68d8"/><rect x=".6" y=".6" width="5" height="5" fill="#3c68d8"/><path d="M-5.6 -3.4H-.6M.6 -3.4H5.6M-5.6 2.8H-.6M.6 2.8H5.6" stroke="#7898e8" stroke-width="1"/></svg>
<svg class="a" style="left:101.0px;top:110.5px" width="14" height="14" viewBox="-7.0 -7.0 14 14"><path d="M-4.6 -5.6H-2V5.6H-3.6z" fill="#4868c0"/><path d="M-4.6 -5.6H-3V5.6H-3.6z" fill="#b8c8f0"/><rect x="-1.6" y="-5" width="6.6" height="4.4" fill="#f4f6fc" stroke="#8898c8" stroke-width=".5"/></svg>
<svg class="a" style="left:120.0px;top:110.5px" width="14" height="14" viewBox="-7.0 -7.0 14 14"><path d="M-4.6 -5.6H-1.6L-1 3.6H-5z" fill="#5878c8"/><path d="M-3.6 -5.6H-2.6L-2.4 3.6H-3.8z" fill="#c8d4f4"/><path d="M0 5.6V1.6L5.4 0V5.6z" fill="#2c4ca8"/></svg>
<span class="t" style="left:140px;top:113.55px;font-size:8.8px;color:#222;letter-spacing:-1.370px;">EDF</span>
<svg class="a" style="left:155.5px;top:115.5px;" width="3" height="5" viewBox="0 0 3 5"><path d="M3 0V5L0 2.5z" fill="#111"/></svg>
<svg class="a" style="left:164.0px;top:110.5px" width="14" height="14" viewBox="-7.0 -7.0 14 14"><path d="M0 -1C-2 -6 -6.4 -6 -5.6 -2C-5 0 -3 .6 -1 .4C-4 1 -4.6 5 -2 5.4C-.6 5 0 3 0 1C0 3 .6 5 2 5.4C4.6 5 4 1 1 .4C3 .6 5 0 5.6 -2C6.4 -6 2 -6 0 -1z" fill="#3868d8" stroke="#c83878" stroke-width=".9"/></svg>
<svg class="a" style="left:182.5px;top:116px;" width="5" height="3" viewBox="0 0 5 3"><path d="M0 0H5L2.5 3z" fill="#222"/></svg>
<svg class="a" style="left:191.5px;top:110.5px" width="14" height="14" viewBox="-7.0 -7.0 14 14"><rect x="-6" y="-3.6" width="5" height="6.6" rx="1.6" fill="#b8b8b8"/><rect x="1" y="-3.6" width="5" height="6.6" rx="1.6" fill="#b8b8b8"/><path d="M-1.6 -1C-.6 -2 .6 -2 1.6 -1" stroke="#b8b8b8" stroke-width="1" fill="none"/></svg>
<svg class="a" style="left:211.0px;top:110.5px" width="14" height="14" viewBox="-7.0 -7.0 14 14"><circle r="4.8" fill="#c0c0c0"/><circle cx="-1.2" cy="-1.4" r="2" fill="#d8d8d8"/></svg>
<div class="a" style="left:229.5px;top:110.5px;width:1px;height:14px;background:#9c9c9c;"></div>
<div class="a" style="left:230.5px;top:110.5px;width:1px;height:14px;background:#ececec;"></div>
<svg class="a" style="left:236.0px;top:110.5px" width="14" height="14" viewBox="-7.0 -7.0 14 14"><path d="M-4 1A4.2 4.2 0 0 1 2.4 -3.4L3.4 -5L4.8 -.6L.4 -.4L1.4 -1.8A2.4 2.4 0 0 0 -2.2 1z" fill="#3868d8"/><path d="M4 -1A4.2 4.2 0 0 1 -2.4 3.4L-3.4 5L-4.8 .6L-.4 .4L-1.4 1.8A2.4 2.4 0 0 0 2.2 -1z" fill="#3868d8"/></svg>
<div class="a" style="left:255px;top:110.5px;width:1px;height:14px;background:#9c9c9c;"></div>
<div class="a" style="left:256px;top:110.5px;width:1px;height:14px;background:#ececec;"></div>
<div class="a" style="left:263px;top:114.5px;width:13px;height:6.5px;background:linear-gradient(90deg,#e82020 0,#e82020 16%,#f0e020 16%,#f0e020 32%,#28c028 32%,#28c028 50%,#20c0d8 50%,#20c0d8 66%,#2838e0 66%,#2838e0 84%,#c828d0 84%);"></div>
<svg class="a" style="left:23px;top:126.5px;" width="411.5" height="201.5" viewBox="0 0 411.5 201.5"><defs><pattern id="ap" x="-0.2" y="-0.5" width="45.9" height="45.9" patternUnits="userSpaceOnUse"><rect width="45.9" height="45.9" fill="#ebebeb"/><path d="M0 0H45.9M0 0V45.9" stroke="#fcfcfc" stroke-width="1.2" stroke-dasharray="3.4 2"/><g transform="translate(28.5,17)"><circle r="10.2" fill="#fbfbfb"/><path d="M0 -2.6L1.6 -10.6" stroke="#ebebeb" stroke-width="1.4" transform="rotate(0)"/><path d="M0 -2.6L1.6 -10.6" stroke="#ebebeb" stroke-width="1.4" transform="rotate(40)"/><path d="M0 -2.6L1.6 -10.6" stroke="#ebebeb" stroke-width="1.4" transform="rotate(80)"/><path d="M0 -2.6L1.6 -10.6" stroke="#ebebeb" stroke-width="1.4" transform="rotate(120)"/><path d="M0 -2.6L1.6 -10.6" stroke="#ebebeb" stroke-width="1.4" transform="rotate(160)"/><path d="M0 -2.6L1.6 -10.6" stroke="#ebebeb" stroke-width="1.4" transform="rotate(200)"/><path d="M0 -2.6L1.6 -10.6" stroke="#ebebeb" stroke-width="1.4" transform="rotate(240)"/><path d="M0 -2.6L1.6 -10.6" stroke="#ebebeb" stroke-width="1.4" transform="rotate(280)"/><path d="M0 -2.6L1.6 -10.6" stroke="#ebebeb" stroke-width="1.4" transform="rotate(320)"/><circle r="2.4" fill="#ebebeb"/></g></pattern></defs><rect width="411.5" height="201.5" fill="url(#ap)"/></svg>
<svg class="a" style="left:131px;top:136px;overflow:hidden;" width="195.5" height="183.5" viewBox="0 0 195.5 183.5"><defs>
<radialGradient id="gB" cx=".5" cy=".52" r=".5"><stop offset="0" stop-color="#2444a4"/><stop offset=".35" stop-color="#2658b8"/><stop offset=".7" stop-color="#2a80d4"/><stop offset=".9" stop-color="#36a8dc"/><stop offset="1" stop-color="#38b8b0"/></radialGradient>
<radialGradient id="gG" cx=".5" cy=".5" r=".5"><stop offset="0" stop-color="#0e5030" stop-opacity=".95"/><stop offset=".65" stop-color="#0c4428" stop-opacity=".8"/><stop offset="1" stop-color="#062010" stop-opacity="0"/></radialGradient>
<radialGradient id="gO" cx=".5" cy=".5" r=".5"><stop offset="0" stop-color="#584110"/><stop offset=".75" stop-color="#604712"/><stop offset=".93" stop-color="#806018"/><stop offset="1" stop-color="#684c12"/></radialGradient>
<radialGradient id="gY" cx=".5" cy=".5" r=".6"><stop offset="0" stop-color="#76902a"/><stop offset=".7" stop-color="#8aa034"/><stop offset="1" stop-color="#a4b048"/></radialGradient>
<filter id="bl1" x="-20%" y="-20%" width="140%" height="140%"><feGaussianBlur stdDeviation=".7"/></filter>
<filter id="bl2" x="-30%" y="-30%" width="160%" height="160%"><feGaussianBlur stdDeviation="1.6"/></filter>
</defs><rect width="195.5" height="183.5" fill="#020202"/><g filter="url(#bl2)"><circle cx="133.0" cy="34.0" r="21.5" fill="#0f5530" opacity="0.5"/><circle cx="118.0" cy="21.0" r="7.5" fill="#0f5530" opacity="0.75"/><circle cx="113.0" cy="33.0" r="6" fill="#0f5530" opacity="0.7"/><circle cx="121.0" cy="12.0" r="5.5" fill="#0f5530" opacity="0.65"/><circle cx="115.0" cy="44.0" r="5" fill="#0f5530" opacity="0.6"/><circle cx="128.0" cy="9.0" r="3.5" fill="#0f5530" opacity="0.5"/><circle cx="111.0" cy="22.0" r="4" fill="#0f5530" opacity="0.6"/><circle cx="141.0" cy="52.0" r="6" fill="#0f5530" opacity="0.45"/><circle cx="127.0" cy="54.0" r="5" fill="#0f5530" opacity="0.45"/><circle cx="149.0" cy="22.0" r="5" fill="#0f5530" opacity="0.4"/><circle cx="160.0" cy="28.0" r="2" fill="#0f5530" opacity="0.6"/><circle cx="117.0" cy="7.0" r="2.5" fill="#0f5530" opacity="0.5"/></g><path d="M149.1 32.8L154.6 34.8L148.9 36.4zM148.0 39.8L152.6 44.2L146.4 43.0zM144.8 44.9L147.4 50.6L142.1 47.3zM142.7 46.9L143.6 52.0L139.6 48.7zM132.6 50.1L130.2 55.2L129.1 49.6zM126.7 48.8L123.1 51.5L123.6 47.1zM123.1 46.7L118.7 48.6L120.5 44.2zM118.8 41.6L113.3 41.8L117.5 38.3zM117.4 38.1L112.9 37.0L116.9 34.6zM117.3 30.5L112.2 26.9L118.4 27.2zM121.3 23.0L119.9 18.6L124.0 20.7zM126.5 19.3L127.0 14.8L129.9 18.2zM131.8 17.9L133.7 13.9L135.3 18.1zM135.1 18.0L138.3 12.8L138.6 18.9zM141.9 20.6L146.1 18.4L144.6 22.9zM148.1 28.4L154.2 28.6L148.9 31.8z" fill="#30b890" opacity=".9" filter="url(#bl1)"/><circle cx="133.0" cy="34.0" r="17.6" fill="url(#gB)" filter="url(#bl1)"/><path d="M143.9 20.2A17.6 17.6 0 0 1 143.9 47.8" stroke="#40d078" stroke-width="1.3" fill="none" opacity=".8" filter="url(#bl1)"/><path d="M132.5 51.6A17.6 17.6 0 0 1 118.9 44.5" stroke="#38c870" stroke-width="1.2" fill="none" opacity=".7" filter="url(#bl1)"/><path d="M89.6 149.1L83.3 160.0L73.0 167.3L60.1 167.5L48.4 162.5L41.8 151.8L40.4 139.5L46.7 128.6L57.0 121.3L69.9 121.1L81.6 126.1L88.2 136.8z" fill="url(#gO)" stroke="#806018" stroke-width="1" stroke-linejoin="round" filter="url(#bl1)"/><circle cx="69.0" cy="142.3" r="4.5" fill="#6c5014" opacity=".7" filter="url(#bl2)"/><g transform="translate(99.3,104.5) rotate(-33)" filter="url(#bl1)"><rect x="-17.8" y="-19.400" width="35.600" height="38.800" rx="11" ry="11" fill="#f2e4c0"/><rect x="-16.4" y="-18.0" width="15.8" height="17.4" rx="5" ry="5" fill="url(#gY)"/><rect x="0.5999999999999996" y="-18.0" width="15.8" height="17.4" rx="5" ry="5" fill="url(#gY)"/><rect x="-16.4" y="0.6000000000000014" width="15.8" height="17.4" rx="5" ry="5" fill="url(#gY)"/><rect x="0.5999999999999996" y="0.6000000000000014" width="15.8" height="17.4" rx="5" ry="5" fill="url(#gY)"/></g><path d="M28.2 160.0L162.0 59.9" stroke="#f40c18" stroke-width="2.5"/><path d="M142.1 61.2L163.0 59.0L155.3 75.7" stroke="#f40c18" stroke-width="2.4" fill="none" stroke-linejoin="miter"/><path d="M108.0 94.4L112.2 101.1M107.0 97.9L111.5 96.0" stroke="#e020e0" stroke-width="1.1"/></svg>
<div class="a" style="left:434.5px;top:126.5px;width:27.5px;height:226px;background:#d9d9d9;"></div>
<div class="a" style="left:434.5px;top:126.5px;width:1px;height:226px;background:#c8c8c8;"></div>
<svg class="a" style="left:453px;top:135.5px;" width="5" height="3" viewBox="0 0 5 3"><path d="M0 0H5L2.5 3z" fill="#222"/></svg>
<div class="a" style="left:436px;top:148.5px;width:22px;height:1px;background:#a8a8a8;"></div>
<div class="a" style="left:436px;top:149.5px;width:22px;height:1px;background:#ececec;"></div>
<svg class="a" style="left:453px;top:160.5px;" width="5" height="3" viewBox="0 0 5 3"><path d="M0 0H5L2.5 3z" fill="#222"/></svg>
<div class="a" style="left:436px;top:173.5px;width:22px;height:1px;background:#a8a8a8;"></div>
<div class="a" style="left:436px;top:174.5px;width:22px;height:1px;background:#ececec;"></div>
<svg class="a" style="left:453px;top:185.5px;" width="5" height="3" viewBox="0 0 5 3"><path d="M0 0H5L2.5 3z" fill="#222"/></svg>
<div class="a" style="left:436px;top:198.5px;width:22px;height:1px;background:#a8a8a8;"></div>
<div class="a" style="left:436px;top:199.5px;width:22px;height:1px;background:#ececec;"></div>
<svg class="a" style="left:453px;top:210.5px;" width="5" height="3" viewBox="0 0 5 3"><path d="M0 0H5L2.5 3z" fill="#222"/></svg>
<div class="a" style="left:436px;top:224px;width:22px;height:1px;background:#a8a8a8;"></div>
<div class="a" style="left:436px;top:225px;width:22px;height:1px;background:#ececec;"></div>
<svg class="a" style="left:453px;top:236px;" width="5" height="3" viewBox="0 0 5 3"><path d="M0 0H5L2.5 3z" fill="#222"/></svg>
<div class="a" style="left:436px;top:249.5px;width:22px;height:1px;background:#a8a8a8;"></div>
<div class="a" style="left:436px;top:250.5px;width:22px;height:1px;background:#ececec;"></div>
<svg class="a" style="left:453px;top:261.5px;" width="5" height="3" viewBox="0 0 5 3"><path d="M0 0H5L2.5 3z" fill="#222"/></svg>
<div class="a" style="left:436px;top:275px;width:22px;height:1px;background:#a8a8a8;"></div>
<div class="a" style="left:436px;top:276px;width:22px;height:1px;background:#ececec;"></div>
<svg class="a" style="left:453px;top:287px;" width="5" height="3" viewBox="0 0 5 3"><path d="M0 0H5L2.5 3z" fill="#222"/></svg>
<div class="a" style="left:436px;top:300.5px;width:22px;height:1px;background:#a8a8a8;"></div>
<div class="a" style="left:436px;top:301.5px;width:22px;height:1px;background:#ececec;"></div>
<svg class="a" style="left:453px;top:312.5px;" width="5" height="3" viewBox="0 0 5 3"><path d="M0 0H5L2.5 3z" fill="#aaa"/></svg>
<div class="a" style="left:436px;top:326px;width:22px;height:1px;background:#a8a8a8;"></div>
<div class="a" style="left:436px;top:327px;width:22px;height:1px;background:#ececec;"></div>
<svg class="a" style="left:453px;top:338px;" width="5" height="3" viewBox="0 0 5 3"><path d="M0 0H5L2.5 3z" fill="#222"/></svg>
<svg class="a" style="left:435.8px;top:129.5px" width="14" height="14" viewBox="-7.0 -7.0 14 14"><rect x="-5" y="-5" width="10" height="10" fill="#6080c8" stroke="#3050a0" stroke-width=".7"/><rect x="-3" y="-3" width="6" height="6" fill="#e8ecf8"/></svg>
<svg class="a" style="left:435.8px;top:154.5px" width="14" height="14" viewBox="-7.0 -7.0 14 14"><rect x="-5" y="-4.6" width="10" height="9.6" fill="#2c3850" stroke="#4868b0" stroke-width=".8"/><path d="M-5 5L5 -4.6V5z" fill="#1c2438"/></svg>
<svg class="a" style="left:435.8px;top:179.5px" width="14" height="14" viewBox="-7.0 -7.0 14 14"><rect x="-5" y="-5" width="10" height="10" fill="#e8ecf8" stroke="#4060b0" stroke-width=".8"/><path d="M-1.7 -5V5M1.7 -5V5M-5 -1.7H5M-5 1.7H5" stroke="#4060b0" stroke-width=".7"/></svg>
<svg class="a" style="left:435.8px;top:204.5px" width="14" height="14" viewBox="-7.0 -7.0 14 14"><path d="M-5.6 -3.6V2M5.6 -3.6V2M-5.6 -2.4H5.6" stroke="#4060b0" stroke-width=".9" fill="none"/></svg>
<span class="t" style="left:438.5px;top:211.08px;font-size:6.4px;color:#3050a0;letter-spacing:0.492px;">µm</span>
<svg class="a" style="left:435.8px;top:230.0px" width="14" height="14" viewBox="-7.0 -7.0 14 14"><path d="M-5.6 -3.6H3.6V3.6H-3.6V-5.6" stroke="#4870c0" stroke-width=".9" fill="none" stroke-dasharray="2 .8"/><path d="M3.6 3.6L5.6 5.6" stroke="#4870c0" stroke-width=".9"/></svg>
<svg class="a" style="left:435.8px;top:255.5px" width="14" height="14" viewBox="-7.0 -7.0 14 14"><path d="M-5.4 0C-5.4 -3 -2.4 -4 0 -2.6C2 -1.6 3 -4 5 -3C6.4 -1.6 5 2 2.4 3.4C0 4.6 -5.4 4 -5.4 0z" fill="#88a8e8" stroke="#3860c0" stroke-width=".9"/></svg>
<svg class="a" style="left:435.8px;top:281.0px" width="14" height="14" viewBox="-7.0 -7.0 14 14"><path d="M-6 0C-5 -5 -4 -5 -3 0C-2 5 -1 5 0 0C1 -5 2 -5 3 0C4 4 5 3 6 0" stroke="#3060b8" stroke-width="1" fill="none"/><path d="M-6.4 .6H6.4" stroke="#6088c8" stroke-width=".6"/></svg>
<svg class="a" style="left:435.8px;top:306.5px" width="14" height="14" viewBox="-7.0 -7.0 14 14"><path d="M-4.6 -5.6V5.6" stroke="#b0b0b0" stroke-width="1.4"/><path d="M-3.6 -5H4.6L2.6 -2L4.6 1H-3.6z" fill="#c4c4c4"/></svg>
<div class="a" style="left:23px;top:328px;width:411.5px;height:71px;background:#d9d9d9;"></div>
<div class="a" style="left:434.5px;top:352px;width:27.5px;height:47px;background:#d9d9d9;"></div>
<span class="t" style="left:437.8px;top:332.33px;font-size:14.5px;color:#3060b8;font-weight:bold;font-family:'Liberation Serif',serif;">A</span>
<div class="a" style="left:26.5px;top:332px;width:346px;height:17.6px;background:#f6f6f6;box-shadow:inset 1px 1px 0 #9c9c9c, inset -1px -1px 0 #fff"></div>
<svg class="a" style="left:26.5px;top:332px;" width="346" height="18.5" viewBox="0 0 346 18.5"><path d="M11.24 10.300V15.900M18.98 10.300V15.900M26.72 10.300V15.900M34.46 10.300V15.900M49.94 10.300V15.900M57.68 10.300V15.900M65.42 10.300V15.900M73.16 10.300V15.900M88.64 10.300V15.900M96.38 10.300V15.900M104.12 10.300V15.900M111.86 10.300V15.900M127.34 10.300V15.900M135.08 10.300V15.900M142.82 10.300V15.900M150.56 10.300V15.900M166.04 10.300V15.900M173.78 10.300V15.900M181.52 10.300V15.900M189.26 10.300V15.900M204.74 10.300V15.900M212.48 10.300V15.900M220.22 10.300V15.900M227.96 10.300V15.900M243.44 10.300V15.900M251.18 10.300V15.900M258.92 10.300V15.900M266.66 10.300V15.900M282.14 10.300V15.900M289.88 10.300V15.900M297.62 10.300V15.900M305.36 10.300V15.900M320.84 10.300V15.900M328.58 10.300V15.900M336.32 10.300V15.900" stroke="#6c6c6c" stroke-width=".9"/><path d="M3.50 9.800V15.900M42.20 9.800V15.900M80.90 9.800V15.900M119.60 9.800V15.900M158.30 9.800V15.900M197.00 9.800V15.900M235.70 9.800V15.900M274.40 9.800V15.900M313.10 9.800V15.900" stroke="#1c1c1c" stroke-width="1"/><path d="M150.200 1.500V16" stroke="#4878d0" stroke-width="1.700"/></svg>
<span class="t" style="left:27.9px;top:335.34px;font-size:7.4px;color:#222;letter-spacing:0.075px;">0</span>
<span class="t" style="left:63.45px;top:335.34px;font-size:7.4px;color:#222;letter-spacing:0.073px;">0.5</span>
<span class="t" style="left:105.30000000000001px;top:335.34px;font-size:7.4px;color:#222;letter-spacing:0.075px;">1</span>
<span class="t" style="left:140.85000000000002px;top:335.34px;font-size:7.4px;color:#222;letter-spacing:0.073px;">1.5</span>
<span class="t" style="left:182.70000000000002px;top:335.34px;font-size:7.4px;color:#222;letter-spacing:0.075px;">2</span>
<span class="t" style="left:218.25px;top:335.34px;font-size:7.4px;color:#222;letter-spacing:0.073px;">2.5</span>
<span class="t" style="left:260.1px;top:335.34px;font-size:7.4px;color:#222;letter-spacing:0.075px;">3</span>
<span class="t" style="left:295.65000000000003px;top:335.34px;font-size:7.4px;color:#222;letter-spacing:0.073px;">3.5</span>
<span class="t" style="left:337.5px;top:335.34px;font-size:7.4px;color:#222;letter-spacing:0.075px;">4</span>
<svg class="a" style="left:374.5px;top:337.5px;" width="5" height="7" viewBox="0 0 5 7"><path d="M5 0V7L0 3.5z" fill="#a8a8a8"/></svg>
<svg class="a" style="left:382.5px;top:333.0px" width="14" height="14" viewBox="-7.0 -7.0 14 14"><circle cy="-2.4" r="2.6" fill="#e83848"/><path d="M0 0V6" stroke="#888" stroke-width="1"/><circle cx="-.8" cy="-3.2" r=".8" fill="#f8a0a8"/></svg>
<svg class="a" style="left:399.5px;top:337.5px;" width="5" height="7" viewBox="0 0 5 7"><path d="M0 0V7L5 3.5z" fill="#a8a8a8"/></svg>
<svg class="a" style="left:404.0px;top:333.0px" width="14" height="14" viewBox="-7.0 -7.0 14 14"><rect x="-5.6" y="-4.6" width="11.2" height="4.6" fill="#58a858" stroke="#286828" stroke-width=".5"/><path d="M-5.6 3.6H5.6M-5.6 1.6V5.6M5.6 1.6V5.6" stroke="#3868c0" stroke-width="1"/></svg>
<div class="a" style="left:418.5px;top:333px;width:13.5px;height:15px;background:#e8ecf4;box-shadow:inset 0 0 0 .7px #7890c0"></div>
<svg class="a" style="left:418.5px;top:333.0px" width="14" height="14" viewBox="-7.0 -7.0 14 14"><path d="M-3 -4.6L3 1.4M3 -4.6L-3 1.4" stroke="#3868c0" stroke-width="1.1"/><path d="M-4.6 4.4H4.6M-4.6 2.6V6M4.6 2.6V6" stroke="#3868c0" stroke-width=".9"/></svg>
<svg class="a" style="left:227.8px;top:352px;" width="4.6" height="2.8" viewBox="0 0 4.6 2.8"><path d="M0 0H4.6L2.3 2.8z" fill="#111"/></svg>
<div class="a" style="left:26.5px;top:351.8px;width:172px;height:1px;background:#8c8c8c;"></div>
<div class="a" style="left:260px;top:351.8px;width:112px;height:1px;background:#8c8c8c;"></div>
<span class="t" style="left:26.5px;top:356.85px;font-size:8.8px;color:#222;">Z</span>
<svg class="a" style="left:33.5px;top:358.5px;" width="3" height="5" viewBox="0 0 3 5"><path d="M0 0V5L3 2.5z" fill="#111"/></svg>
<div class="a" style="left:38.5px;top:356.3px;width:258px;height:9.2px;background:#f2f5fb;box-shadow:inset 1px 1px 0 #9a9a9a, inset -1px -1px 0 #fff"></div>
<div class="a" style="left:40.4px;top:357.8px;width:253.4px;height:6.2px;background:repeating-linear-gradient(90deg,#4c79d0 0,#4c79d0 3.8px,transparent 3.8px,transparent 5.8px);"></div>
<div class="a" style="left:40.4px;top:360.3px;width:253.4px;height:1.2px;background:repeating-linear-gradient(90deg,#3660b8 0,#3660b8 3.8px,transparent 3.8px,transparent 5.8px);"></div>
<div class="a" style="left:40.4px;top:357.8px;width:253.4px;height:1.4px;background:repeating-linear-gradient(90deg,#7c9ce0 0,#7c9ce0 3.8px,transparent 3.8px,transparent 5.8px);"></div>
<svg class="a" style="left:149.6px;top:356.8px;" width="6" height="8.4" viewBox="0 0 6 8.4"><rect x=".4" y=".4" width="5.2" height="7.6" fill="#7c94c4" stroke="#1c2c58" stroke-width=".9"/><path d="M.4 4.200H5.600M3 .4V8" stroke="#1c2c58" stroke-width=".7"/></svg>
<svg class="a" style="left:297.0px;top:356.2px" width="10" height="10" viewBox="-5.0 -5.0 10 10"><path d="M-3 -3.6V3.6" stroke="#3c6cd0" stroke-width="1.4"/><path d="M3 -3.6V3.6L-2.2 0z" fill="#3c6cd0"/></svg>
<svg class="a" style="left:310.0px;top:356.2px" width="10" height="10" viewBox="-5.0 -5.0 10 10"><path d="M-.4 -3.400L-4 0L-.4 3.400M4.200 -3.400L.6 0L4.200 3.400" stroke="#4c7cd8" stroke-width="1.700" fill="none"/></svg>
<svg class="a" style="left:324.0px;top:356.2px" width="10" height="10" viewBox="-5.0 -5.0 10 10"><path d="M-4 -4.600V4.600L5 0z" fill="#40b040"/></svg>
<svg class="a" style="left:337.5px;top:356.2px" width="10" height="10" viewBox="-5.0 -5.0 10 10"><path d="M.4 -3.400L4 0L.4 3.400M-4.200 -3.400L-.6 0L-4.200 3.400" stroke="#4c7cd8" stroke-width="1.700" fill="none"/></svg>
<svg class="a" style="left:351.0px;top:356.2px" width="10" height="10" viewBox="-5.0 -5.0 10 10"><path d="M3 -3.6V3.6" stroke="#3c6cd0" stroke-width="1.4"/><path d="M-3 -3.6V3.6L2.2 0z" fill="#3c6cd0"/></svg>
<div class="a" style="left:366px;top:357px;width:44px;height:9px;background:#fafafa;border-radius:4.5px;box-shadow:inset 0 0 0 .8px #7090d0"></div>
<div class="a" style="left:366px;top:357px;width:6px;height:9px;background:#4070d0;border-radius:4.5px 0 0 4.5px"></div>
<div class="a" style="left:374px;top:359px;width:18px;height:5px;background:#4878d8;"></div>
<div class="a" style="left:405px;top:357px;width:7px;height:9px;background:#5080d8;border-radius:0 4.5px 4.5px 0"></div>
<svg class="a" style="left:412.0px;top:356.2px" width="10" height="10" viewBox="-5.0 -5.0 10 10"><path d="M-3.6 -4.2H0A4.2 4.2 0 0 1 0 4.2H-3.6z" fill="#58b848" stroke="#2c8020" stroke-width=".5"/><path d="M-2 -1.6V1.6M-2 0H1M1 -1.6V1.6" stroke="#fff" stroke-width=".8"/></svg>
<svg class="a" style="left:422.5px;top:356.2px" width="10" height="10" viewBox="-5.0 -5.0 10 10"><path d="M0 -4V4M-5 0H-1.4M5 0H1.4" stroke="#3c6cd0" stroke-width="1.3"/><path d="M-2.6 -2L-.6 0L-2.6 2zM2.6 -2L.6 0L2.6 2z" fill="#3c6cd0"/></svg>
<svg class="a" style="left:449.0px;top:356.2px" width="10" height="10" viewBox="-5.0 -5.0 10 10"><circle r="3.4" fill="#222"/><circle cx=".8" cy=".6" r="1.3" fill="#ddd"/></svg>
<svg class="a" style="left:23px;top:369.5px;" width="200" height="13" viewBox="0 0 200 13"><path d="M28 .5H177.500L172 12H28z" fill="#e2e2e2"/><path d="M56.5 1L60.5 6.2L56.500 11.500M97.500 1L101.500 6.200L97.500 11.500M136 1L140 6.200L136 11.500" stroke="#8c8c8c" stroke-width=".9" fill="none"/><path d="M180 .5L173 12" stroke="#555" stroke-width=".9" fill="none"/><path d="M28 12H173" stroke="#f4f4f4" stroke-width="1"/><path d="M1 .5L5.500 12H23.500L28.500 .5" fill="#ececec" stroke="#222" stroke-width="1.1"/></svg>
<span class="t" style="left:32px;top:372.05px;font-size:8.8px;color:#111;letter-spacing:-0.250px;font-weight:bold;">All</span>
<div class="a" style="left:52px;top:374.5px;width:6px;height:6px;background:#28c028;box-shadow:0 0 0 .5px #188018"></div>
<span class="t" style="left:60.5px;top:372.72px;font-size:8.6px;color:#222;letter-spacing:-0.398px;">FITC</span>
<div class="a" style="left:60px;top:381.3px;width:18.5px;height:1.2px;background:#28c028;"></div>
<div class="a" style="left:88.5px;top:374.5px;width:6px;height:6px;background:#d81818;box-shadow:0 0 0 .5px #901010"></div>
<span class="t" style="left:97px;top:372.72px;font-size:8.6px;color:#222;letter-spacing:-0.773px;">TexRed</span>
<div class="a" style="left:96.5px;top:381.3px;width:25.5px;height:1.2px;background:#d81818;"></div>
<div class="a" style="left:130px;top:374.5px;width:6px;height:6px;background:#1840c8;box-shadow:0 0 0 .5px #102880"></div>
<span class="t" style="left:139px;top:372.72px;font-size:8.6px;color:#222;letter-spacing:-0.516px;">DAPI</span>
<div class="a" style="left:138.5px;top:381.3px;width:19px;height:1.2px;background:#1840c8;"></div>
<span class="t" style="left:167.5px;top:373.07px;font-size:7.6px;color:#222;letter-spacing:-0.279px;">Custom</span>
<div class="a" style="left:24px;top:384.5px;width:58px;height:12.5px;background:#dcdcdc;box-shadow:inset 1px 1px 0 #a4a4a4, inset -1px -1px 0 #f6f6f6"></div>
<div class="a" style="left:84px;top:384.5px;width:124px;height:12.5px;background:#dcdcdc;box-shadow:inset 1px 1px 0 #a4a4a4, inset -1px -1px 0 #f6f6f6"></div>
<div class="a" style="left:210px;top:384.5px;width:250px;height:12.5px;background:#dcdcdc;box-shadow:inset 1px 1px 0 #a4a4a4, inset -1px -1px 0 #f6f6f6"></div>
<span class="t" style="left:26.5px;top:387.27px;font-size:8.9px;color:#2828e0;letter-spacing:-0.536px;">3e-4 mm/px</span>
<span class="t" style="left:88px;top:387.27px;font-size:8.9px;color:#222;letter-spacing:-0.388px;">3x12bit: 512 x 480 pixels</span>
<span class="t" style="left:213.5px;top:387.27px;font-size:8.9px;color:#222;letter-spacing:-0.312px;">[288, 256] MCh: (2014, 1099, 2091)</span>
<div class="a" style="left:470px;top:78px;width:2.6px;height:326.5px;background:#c6c6c6;"></div>
<div class="a" style="left:472.5px;top:69.2px;width:242.29999999999995px;height:10px;background:linear-gradient(#3a3a3a,#2a2a2a 18%,#727272 55%,#a8a8a8 88%,#b4b4b4);"></div>
<svg class="a" style="left:474px;top:71.5px;" width="6" height="5" viewBox="0 0 6 5"><path d="M.5 .5L3 2.5L.5 4.5M3 .5L5.5 2.5L3 4.5" stroke="#fff" stroke-width="1" fill="none"/></svg>
<svg class="a" style="left:707.5px;top:71.5px;" width="6" height="5.5" viewBox="0 0 6 5.5"><path d="M.5 .5L5.5 5M5.5 .5L.5 5" stroke="#fff" stroke-width="1.2"/></svg>
<div class="a" style="left:472.5px;top:79.2px;width:242.29999999999995px;height:12.3px;background:#c8c8c8;"></div>
<div class="a" style="left:472.5px;top:90.4px;width:242.29999999999995px;height:1.1px;background:#909094;"></div>
<div class="a" style="left:472.5px;top:79.5px;width:55.5px;height:12px;background:#d4d4d4;border-radius:0 2px 0 0;box-shadow:inset 1px 1px 0 #e8e8e8, 1px 0 0 #6c6c6c;"></div>
<span class="t" style="left:477.5px;top:80.92px;font-size:8.6px;color:#111;letter-spacing:0.214px;font-weight:bold;-webkit-text-stroke:.25px #111;">Preview</span>
<span class="t" style="left:518.5px;top:81.89px;font-size:8.4px;color:#111;letter-spacing:0.128px;font-weight:bold;-webkit-text-stroke:.25px #111;">x</span>
<div class="a" style="left:472.5px;top:91.5px;width:242.29999999999995px;height:117.5px;background:#a0a0a4;"></div>
<svg class="a" style="left:533.5px;top:93.5px;overflow:hidden;" width="122.5" height="115.0" viewBox="0 0 122.5 115.0"><rect width="122.5" height="115.0" fill="#030303"/><g transform="scale(0.6266 0.6267)"><g filter="url(#bl2)"><circle cx="133.0" cy="34.0" r="21.5" fill="#0f5530" opacity="0.5"/><circle cx="118.0" cy="21.0" r="7.5" fill="#0f5530" opacity="0.75"/><circle cx="113.0" cy="33.0" r="6" fill="#0f5530" opacity="0.7"/><circle cx="121.0" cy="12.0" r="5.5" fill="#0f5530" opacity="0.65"/><circle cx="115.0" cy="44.0" r="5" fill="#0f5530" opacity="0.6"/><circle cx="128.0" cy="9.0" r="3.5" fill="#0f5530" opacity="0.5"/><circle cx="111.0" cy="22.0" r="4" fill="#0f5530" opacity="0.6"/><circle cx="141.0" cy="52.0" r="6" fill="#0f5530" opacity="0.45"/><circle cx="127.0" cy="54.0" r="5" fill="#0f5530" opacity="0.45"/><circle cx="149.0" cy="22.0" r="5" fill="#0f5530" opacity="0.4"/><circle cx="160.0" cy="28.0" r="2" fill="#0f5530" opacity="0.6"/><circle cx="117.0" cy="7.0" r="2.5" fill="#0f5530" opacity="0.5"/></g><path d="M149.1 32.8L154.6 34.8L148.9 36.4zM148.0 39.8L152.6 44.2L146.4 43.0zM144.8 44.9L147.4 50.6L142.1 47.3zM142.7 46.9L143.6 52.0L139.6 48.7zM132.6 50.1L130.2 55.2L129.1 49.6zM126.7 48.8L123.1 51.5L123.6 47.1zM123.1 46.7L118.7 48.6L120.5 44.2zM118.8 41.6L113.3 41.8L117.5 38.3zM117.4 38.1L112.9 37.0L116.9 34.6zM117.3 30.5L112.2 26.9L118.4 27.2zM121.3 23.0L119.9 18.6L124.0 20.7zM126.5 19.3L127.0 14.8L129.9 18.2zM131.8 17.9L133.7 13.9L135.3 18.1zM135.1 18.0L138.3 12.8L138.6 18.9zM141.9 20.6L146.1 18.4L144.6 22.9zM148.1 28.4L154.2 28.6L148.9 31.8z" fill="#30b890" opacity=".9" filter="url(#bl1)"/><circle cx="133.0" cy="34.0" r="17.6" fill="url(#gB)" filter="url(#bl1)"/><path d="M143.9 20.2A17.6 17.6 0 0 1 143.9 47.8" stroke="#40d078" stroke-width="1.3" fill="none" opacity=".8" filter="url(#bl1)"/><path d="M132.5 51.6A17.6 17.6 0 0 1 118.9 44.5" stroke="#38c870" stroke-width="1.2" fill="none" opacity=".7" filter="url(#bl1)"/><path d="M89.6 149.1L83.3 160.0L73.0 167.3L60.1 167.5L48.4 162.5L41.8 151.8L40.4 139.5L46.7 128.6L57.0 121.3L69.9 121.1L81.6 126.1L88.2 136.8z" fill="url(#gO)" stroke="#806018" stroke-width="1" stroke-linejoin="round" filter="url(#bl1)"/><circle cx="69.0" cy="142.3" r="4.5" fill="#6c5014" opacity=".7" filter="url(#bl2)"/><g transform="translate(99.3,104.5) rotate(-33)" filter="url(#bl1)"><rect x="-17.8" y="-19.400" width="35.600" height="38.800" rx="11" ry="11" fill="#f2e4c0"/><rect x="-16.4" y="-18.0" width="15.8" height="17.4" rx="5" ry="5" fill="url(#gY)"/><rect x="0.5999999999999996" y="-18.0" width="15.8" height="17.4" rx="5" ry="5" fill="url(#gY)"/><rect x="-16.4" y="0.6000000000000014" width="15.8" height="17.4" rx="5" ry="5" fill="url(#gY)"/><rect x="0.5999999999999996" y="0.6000000000000014" width="15.8" height="17.4" rx="5" ry="5" fill="url(#gY)"/></g></g><rect x=".5" y=".5" width="121.5" height="114.0" fill="none" stroke="#e84040" stroke-width="1.1"/></svg>
<div class="a" style="left:472.5px;top:209px;width:242.29999999999995px;height:3px;background:linear-gradient(#222,#555);"></div>
<div class="a" style="left:472.5px;top:212px;width:242.29999999999995px;height:13px;background:#d2d2d2;"></div>
<div class="a" style="left:472.5px;top:212.5px;width:77.5px;height:13px;background:#dedede;box-shadow:inset 1px 1px 0 #f8f8f8, 1px 0 0 #707070;"></div>
<div class="a" style="left:550.5px;top:224.5px;width:164.29999999999995px;height:1px;background:#a8a8a8;"></div>
<span class="t" style="left:477.5px;top:215.02px;font-size:8.6px;color:#111;letter-spacing:0.130px;font-weight:bold;-webkit-text-stroke:.25px #111;">Thresholding</span>
<span class="t" style="left:540.5px;top:215.89px;font-size:8.4px;color:#111;letter-spacing:0.128px;font-weight:bold;-webkit-text-stroke:.25px #111;">x</span>
<div class="a" style="left:472.5px;top:225.5px;width:242.29999999999995px;height:180.5px;background:#d9d9d9;"></div>
<div class="a" style="left:472.5px;top:225.5px;width:1px;height:160px;background:#8c8c8c;"></div>
<div class="a" style="left:474.5px;top:385px;width:239.29999999999995px;height:1px;background:#b8b8b8;"></div>
<div class="a" style="left:474.5px;top:386px;width:239.29999999999995px;height:1px;background:#ececec;"></div>
<div class="a" style="left:474.5px;top:225.5px;width:1px;height:160px;background:#eeeeee;"></div>
<div class="a" style="left:479.5px;top:236.5px;width:87px;height:15px;background:#e1e1e1;box-shadow:inset 0 0 0 1px #4c4c4c"></div>
<div class="a" style="left:566px;top:236.5px;width:87.5px;height:15px;background:#fdfdfd;box-shadow:inset 0 0 0 1px #4c4c4c"></div>
<span class="t" style="left:514.5px;top:240.27px;font-size:7.6px;color:#333;letter-spacing:-0.432px;">MCH</span>
<span class="t" style="left:596.5px;top:240.27px;font-size:7.6px;color:#333;letter-spacing:-0.198px;">Intensity</span>
<div class="a" style="left:658px;top:236.5px;width:20.5px;height:15px;background:#dddddd;box-shadow:inset 1px 1px 0 #f4f4f4, inset -1px -1px 0 #a0a0a0"></div>
<div class="a" style="left:683px;top:236.5px;width:12px;height:15px;background:#dddddd;box-shadow:inset 1px 1px 0 #f4f4f4, inset -1px -1px 0 #a0a0a0"></div>
<svg class="a" style="left:660px;top:238.5px;" width="9.5" height="10.5" viewBox="0 0 9.5 10.5"><rect width="9.5" height="10.5" rx=".8" fill="#3038c0"/><rect x="2" y=".4" width="5.6" height="4.2" fill="#f0f0fc"/><rect x="2.4" y="6.6" width="4.8" height="3.9" fill="#c0c8f0"/><rect x="5.2" y="7" width="1.4" height="3" fill="#3038c0"/></svg>
<svg class="a" style="left:672px;top:243px;" width="5" height="3" viewBox="0 0 5 3"><path d="M0 0H5L2.5 3z" fill="#111"/></svg>
<svg class="a" style="left:685.5px;top:239.5px;" width="7" height="9" viewBox="0 0 7 9"><path d="M.5 .8L3.5 3.8L6.5 .8M.5 4.6L3.5 7.6L6.5 4.6" stroke="#111" stroke-width="1.3" fill="none"/></svg>
<div class="a" style="left:480.0px;top:255px;width:16.5px;height:15px;background:#dddddd;box-shadow:inset 1px 1px 0 #f4f4f4, inset -1px -1px 0 #a0a0a0"></div>
<div class="a" style="left:498.4px;top:255px;width:16.5px;height:15px;background:#dddddd;box-shadow:inset 1px 1px 0 #f4f4f4, inset -1px -1px 0 #a0a0a0"></div>
<div class="a" style="left:516.8px;top:255px;width:16.5px;height:15px;background:#dddddd;box-shadow:inset 1px 1px 0 #f4f4f4, inset -1px -1px 0 #a0a0a0"></div>
<div class="a" style="left:535.2px;top:255px;width:16.5px;height:15px;background:#dddddd;box-shadow:inset 1px 1px 0 #f4f4f4, inset -1px -1px 0 #a0a0a0"></div>
<div class="a" style="left:553.6px;top:255px;width:16.5px;height:15px;background:#dddddd;box-shadow:inset 1px 1px 0 #f4f4f4, inset -1px -1px 0 #a0a0a0"></div>
<div class="a" style="left:572.0px;top:255px;width:16.5px;height:15px;background:#dddddd;box-shadow:inset 1px 1px 0 #f4f4f4, inset -1px -1px 0 #a0a0a0"></div>
<div class="a" style="left:590.4px;top:255px;width:16.5px;height:15px;background:#dddddd;box-shadow:inset 1px 1px 0 #f4f4f4, inset -1px -1px 0 #a0a0a0"></div>
<div class="a" style="left:608.8px;top:255px;width:16.5px;height:15px;background:#dddddd;box-shadow:inset 1px 1px 0 #f4f4f4, inset -1px -1px 0 #a0a0a0"></div>
<div class="a" style="left:679px;top:255px;width:16.5px;height:15px;background:#dddddd;box-shadow:inset 1px 1px 0 #f4f4f4, inset -1px -1px 0 #a0a0a0"></div>
<svg class="a" style="left:481.2px;top:255.5px" width="14" height="14" viewBox="-7.0 -7.0 14 14"><path d="M-4 -4L4 4M4 -4L-4 4" stroke="#e02040" stroke-width="1.3"/></svg>
<svg class="a" style="left:499.6px;top:255.5px" width="14" height="14" viewBox="-7.0 -7.0 14 14"><path d="M0 -5.4V-1.4M0 1.4V5.4M-5.4 0H-1.4M1.4 0H5.4" stroke="#f05848" stroke-width=".9"/></svg>
<svg class="a" style="left:518.0px;top:255.5px" width="14" height="14" viewBox="-7.0 -7.0 14 14"><circle r="2.6" fill="none" stroke="#e83030" stroke-width=".9"/><path d="M0 -5.4V-2.6M0 2.6V5.4M-5.4 0H-2.6M2.6 0H5.4" stroke="#e83030" stroke-width=".9"/><circle r=".7" fill="#e83030"/></svg>
<svg class="a" style="left:536.4px;top:255.5px" width="14" height="14" viewBox="-7.0 -7.0 14 14"><circle r="3.4" fill="none" stroke="#e83030" stroke-width="1"/><path d="M0 -5.6V-3.4M0 3.4V5.6M-5.6 0H-3.4M3.4 0H5.6" stroke="#e83030" stroke-width=".9"/></svg>
<svg class="a" style="left:555.8px;top:256.5px" width="12" height="12" viewBox="-6.0 -6.0 12 12"><path d="M-4.5 -1.2A4.2 4.2 0 1 1 2.5 4.6L1.3 2.9A2.2 2.2 0 1 0 -2.8 .2L-1 1.6H-6.2V-3.6z" fill="#3c68d0" stroke="#2848a0" stroke-width=".4"/></svg>
<svg class="a" style="left:574.2px;top:256.5px" width="12" height="12" viewBox="-6.0 -6.0 12 12"><g transform="scale(-1,1)"><path d="M-4.5 -1.2A4.2 4.2 0 1 1 2.5 4.6L1.3 2.9A2.2 2.2 0 1 0 -2.8 .2L-1 1.6H-6.2V-3.6z" fill="#b4b4b4" stroke="#a8a8a8" stroke-width=".4"/></g></svg>
<svg class="a" style="left:592.1px;top:256.0px" width="13" height="13" viewBox="-6.5 -6.5 13 13"><path d="M-4 1A4.2 4.2 0 0 1 2.4 -3.4L3.4 -5L4.8 -.6L.4 -.4L1.4 -1.8A2.4 2.4 0 0 0 -2.2 1z" fill="#e82828"/><path d="M4 -1A4.2 4.2 0 0 1 -2.4 3.4L-3.4 5L-4.8 .6L-.4 .4L-1.4 1.8A2.4 2.4 0 0 0 2.2 -1z" fill="#e82828"/></svg>
<svg class="a" style="left:610.5px;top:256.0px" width="13" height="13" viewBox="-6.5 -6.5 13 13"><circle cy="-.6" r="5" fill="#3c68d0" stroke="#2c50b0" stroke-width=".6"/><path d="M-3 -2.600C-1.600 -4.400 .6 -3.600 0 -1.800C-.6 -.4 -2.600 -.2 -3 -2.600zM.8 .2C2.400 -1.600 4 -.6 3.200 1.200C2.400 2.600 .4 2 .8 .2zM-2.400 1C-1.400 .6 -.8 1.600 -1.600 2.600C-2.600 3 -3.200 1.800 -2.400 1z" fill="#b8ccf4"/><path d="M-2.600 5.600H2.600M0 4.400V5.600" stroke="#2c50b0" stroke-width="1.100"/></svg>
<svg class="a" style="left:680.0px;top:256.0px" width="13" height="13" viewBox="-6.5 -6.5 13 13"><path d="M-4 1A4.2 4.2 0 0 1 2.4 -3.4L3.4 -5L4.8 -.6L.4 -.4L1.4 -1.8A2.4 2.4 0 0 0 -2.2 1z" fill="#e82828"/><path d="M4 -1A4.2 4.2 0 0 1 -2.4 3.4L-3.4 5L-4.8 .6L-.4 .4L-1.4 1.8A2.4 2.4 0 0 0 2.2 -1z" fill="#e82828"/><circle cx="3.4" cy="3.6" r="2.2" fill="#f4f4f4" stroke="#888" stroke-width=".4"/><circle cx="3.4" cy="3.6" r="1" fill="#38a838"/></svg>
<div class="a" style="left:507px;top:277px;width:176.5px;height:7.5px;background:#fbfbfb;"></div>
<svg class="a" style="left:498.5px;top:277px;" width="8.5" height="7.5" viewBox="0 0 8.5 7.5"><path d="M1 3.7H7.6M3 1.6L.8 3.7L3 5.8M5.6 1.6L7.8 3.7L5.6 5.8" stroke="#111" stroke-width="1" fill="none"/></svg>
<div class="a" style="left:618px;top:277px;width:8.5px;height:7.5px;background:#f8b8c0;"></div>
<span class="t" style="left:566px;top:278.73px;font-size:5.4px;color:#333;">6</span>
<span class="t" style="left:584px;top:278.73px;font-size:5.4px;color:#333;">8</span>
<span class="t" style="left:600.5px;top:278.73px;font-size:5.4px;color:#333;">10</span>
<span class="t" style="left:620px;top:278.73px;font-size:5.4px;color:#555;">12</span>
<div class="a" style="left:576.7px;top:278.5px;width:1.6px;height:4px;background:#111;"></div>
<div class="a" style="left:594.7px;top:278.5px;width:1.6px;height:4px;background:#111;"></div>
<div class="a" style="left:612.8px;top:278.5px;width:1.6px;height:4px;background:#111;"></div>
<div class="a" style="left:498.5px;top:285px;width:193.0px;height:57.5px;background:#fff;box-shadow:inset 0 0 0 1px #3c3c3c"></div>
<svg class="a" style="left:499.5px;top:286px;" width="191.0" height="55.5" viewBox="0 0 191.0 55.5"><defs><linearGradient id="hg" x1="0" y1="0" x2="0" y2="1"><stop offset="0" stop-color="#e6e6e6"/><stop offset=".45" stop-color="#f6f6f6"/><stop offset=".8" stop-color="#fdfdfd"/></linearGradient></defs><rect x="9.2" y="0" width="100" height="56.5" fill="url(#hg)"/><path d="M9.2 56.500V38L11 39.800L14 43L19.500 46L25 44.800L32 47L41 45.800L48.500 44.200L56 45.400L64 47L74 48L80 51L86 55.500L88 56.500z" fill="#d2d2d2"/><path d="M2.200 1L2.800 28L4 37.400L9 37.400" stroke="#b0b0b0" stroke-width=".9" fill="none"/><path d="M9.200 0V56.500" stroke="#7c7c7c" stroke-width="1"/><path d="M109.700 0V56.500" stroke="#5c5c5c" stroke-width="1"/><rect x="10" y=".8" width="14" height="11.700" fill="#fafafa"/></svg>
<span class="t" style="left:510px;top:288.58px;font-size:6.4px;color:#333;letter-spacing:-0.057px;">196</span>
<span class="t" style="left:664.5px;top:288.58px;font-size:6.4px;color:#666;letter-spacing:0.195px;">4095</span>
<div class="a" style="left:485.5px;top:284px;width:1px;height:61px;background:#8c8c8c;"></div>
<div class="a" style="left:486.5px;top:284px;width:1px;height:61px;background:#f4f4f4;"></div>
<div class="a" style="left:480.5px;top:306.5px;width:10px;height:6.5px;background:linear-gradient(#fcfcfc,#c8c8c8);box-shadow:0 0 0 .6px #8c8c8c"></div>
<span class="t" style="left:525.8px;top:276.62px;font-size:21px;color:#800000;letter-spacing:-1.059px;font-weight:bold;font-family:'DejaVu Sans',sans-serif;">CrkDongle.com</span>
<div class="a" style="left:479.5px;top:354px;width:50.5px;height:15px;background:#d9d9d9;box-shadow:inset 1px 1px 0 #b0b0b0, inset -1px -1px 0 #f4f4f4"></div>
<span class="t" style="left:488px;top:357.77px;font-size:7.6px;color:#222;letter-spacing:-0.293px;">Clean OFF</span>
<div class="a" style="left:530.5px;top:354px;width:10px;height:15.5px;background:#fbfbfb;box-shadow:inset 0 0 0 1px #3c3c3c"></div>
<svg class="a" style="left:532.5px;top:356px;" width="6" height="11.5" viewBox="0 0 6 11.5"><path d="M0 4.6H6L3 0zM0 6.9H6L3 11.5z" fill="#111"/></svg>
<div class="a" style="left:546px;top:354px;width:50px;height:15px;background:#d9d9d9;box-shadow:inset 1px 1px 0 #b0b0b0, inset -1px -1px 0 #f4f4f4"></div>
<span class="t" style="left:551px;top:357.77px;font-size:7.6px;color:#222;letter-spacing:-0.347px;">Smooth OFF</span>
<div class="a" style="left:596.5px;top:354px;width:10px;height:15.5px;background:#fbfbfb;box-shadow:inset 0 0 0 1px #3c3c3c"></div>
<svg class="a" style="left:598.5px;top:356px;" width="6" height="11.5" viewBox="0 0 6 11.5"><path d="M0 4.6H6L3 0zM0 6.9H6L3 11.5z" fill="#111"/></svg>
<div class="a" style="left:610.5px;top:354px;width:59px;height:15px;background:#d9d9d9;box-shadow:inset 1px 1px 0 #b0b0b0, inset -1px -1px 0 #f4f4f4"></div>
<span class="t" style="left:618.5px;top:357.77px;font-size:7.6px;color:#222;letter-spacing:-0.385px;">Separate OFF</span>
<div class="a" style="left:670px;top:354px;width:10px;height:15.5px;background:#fbfbfb;box-shadow:inset 0 0 0 1px #3c3c3c"></div>
<svg class="a" style="left:672px;top:356px;" width="6" height="11.5" viewBox="0 0 6 11.5"><path d="M0 4.6H6L3 0zM0 6.9H6L3 11.5z" fill="#111"/></svg>
<div class="a" style="left:682px;top:353.5px;width:15.5px;height:15px;background:#dddddd;box-shadow:inset 1px 1px 0 #f4f4f4, inset -1px -1px 0 #a0a0a0"></div>
<svg class="a" style="left:684.5px;top:356px;" width="10.5" height="10" viewBox="0 0 10.5 10"><path d="M.5 .5L10 9.5M10 .5L.5 9.5" stroke="#e02048" stroke-width="1.3"/></svg>
<div class="a" style="left:14px;top:405px;width:700.8px;height:1.6px;background:#c4c4c4;"></div>
<div class="a" style="left:14px;top:406.6px;width:700.8px;height:9.6px;background:linear-gradient(#3a3a3a,#2a2a2a 18%,#727272 55%,#a8a8a8 85%,#b0b0b0);"></div>
<svg class="a" style="left:16px;top:408.5px;" width="5" height="6" viewBox="0 0 5 6"><path d="M.5 .5L2.5 3L4.5 .5M.5 3L2.5 5.5L4.5 3" stroke="#fff" stroke-width="1" fill="none"/></svg>
<svg class="a" style="left:708px;top:409px;" width="6" height="5.5" viewBox="0 0 6 5.5"><path d="M.5 .5L5.5 5M5.5 .5L.5 5" stroke="#fff" stroke-width="1.2"/></svg>
<div class="a" style="left:14px;top:416px;width:700.8px;height:12.5px;background:#c6c6c6;"></div>
<div class="a" style="left:14.5px;top:416.5px;width:89.5px;height:12.5px;background:#d8d8d8;border-radius:0 2px 0 0;box-shadow:inset 1px 1px 0 #eeeeee, 1px 0 0 #707070;"></div>
<div class="a" style="left:104.5px;top:427.6px;width:610.3px;height:1px;background:#8c8c8c;"></div>
<span class="t" style="left:19px;top:418.92px;font-size:8.6px;color:#111;letter-spacing:0.267px;font-weight:bold;-webkit-text-stroke:.25px #111;">Intensity Profile</span>
<span class="t" style="left:94.6px;top:419.89px;font-size:8.4px;color:#111;letter-spacing:0.128px;font-weight:bold;-webkit-text-stroke:.25px #111;">x</span>
<div class="a" style="left:14px;top:428.5px;width:700.8px;height:22px;background:#d9d9d9;"></div>
<div class="a" style="left:104.5px;top:428.6px;width:610.3px;height:1px;background:#e8e8e8;"></div>
<div class="a" style="left:16.3px;top:433px;width:17.499999999999996px;height:17px;background:#ececec;box-shadow:inset 1px 1px 0 #fafafa, inset -1px -1px 0 #c4c4c4"></div>
<svg class="a" style="left:18.0px;top:434.3px" width="14" height="14" viewBox="-7.0 -7.0 14 14"><rect x="-5" y="-5" width="10" height="10" fill="#e4e4e4" stroke="#b0b0b0" stroke-width=".8"/><path d="M-4 4C-3 -4 -1 -4 0 0C1 -4 3 -4 4 4" stroke="#b0b0b0" stroke-width=".9" fill="none"/></svg>
<svg class="a" style="left:36.8px;top:434.3px" width="14" height="14" viewBox="-7.0 -7.0 14 14"><rect x="-5" y="-5" width="10" height="10" fill="#e4e4e4" stroke="#b0b0b0" stroke-width=".8"/><path d="M-4.6 -2C-2 1 2 1 4.6 -2M-4.6 3C-2 0 2 0 4.6 3" stroke="#b0b0b0" stroke-width=".9" fill="none"/></svg>
<svg class="a" style="left:55.6px;top:434.3px" width="14" height="14" viewBox="-7.0 -7.0 14 14"><rect x="-5" y="-5" width="10" height="10" fill="#e4e4e4" stroke="#b0b0b0" stroke-width=".8"/><path d="M-4 2C-3 -4 -1 -4 0 0C1 4 3 3 4 -2" stroke="#b0b0b0" stroke-width=".9" fill="none"/><rect x="0" y="-3" width="4" height="5" fill="#c8c8c8"/></svg>
<div class="a" style="left:74.5px;top:433px;width:1px;height:16px;background:#9c9c9c;"></div>
<div class="a" style="left:75.5px;top:433px;width:1px;height:16px;background:#ececec;"></div>
<svg class="a" style="left:80.7px;top:434.3px" width="14" height="14" viewBox="-7.0 -7.0 14 14"><path d="M-4.4 4.4L4.4 -4.4M.6 -4.4H4.4V-.6" stroke="#111" stroke-width="1.1" fill="none"/></svg>
<svg class="a" style="left:99.5px;top:434.3px" width="14" height="14" viewBox="-7.0 -7.0 14 14"><path d="M0 5.4V-5M-2.4 -2.2L0 -5.2L2.4 -2.2" stroke="#111" stroke-width="1.1" fill="none"/></svg>
<svg class="a" style="left:118.3px;top:434.3px" width="14" height="14" viewBox="-7.0 -7.0 14 14"><path d="M-5.4 0H5M2.2 -2.4L5.2 0L2.2 2.4" stroke="#111" stroke-width="1.1" fill="none"/></svg>
<svg class="a" style="left:138.4px;top:434.3px" width="14" height="14" viewBox="-7.0 -7.0 14 14"><path d="M-1.6 -4.4L2 -1L-1 1L2 5.4M-3.4 -3.6L-1.4 -5L.4 -3" stroke="#111" stroke-width="1.1" fill="none"/></svg>
<svg class="a" style="left:157.2px;top:434.3px" width="14" height="14" viewBox="-7.0 -7.0 14 14"><path d="M0 -5.4V5.4M-5.4 0H5.4M-1.6 -3.4L0 -5.4L1.6 -3.4M3.4 -1.6L5.4 0L3.4 1.6" stroke="#111" stroke-width="1" fill="none"/></svg>
<div class="a" style="left:176.5px;top:433px;width:1px;height:16px;background:#9c9c9c;"></div>
<div class="a" style="left:177.5px;top:433px;width:1px;height:16px;background:#ececec;"></div>
<svg class="a" style="left:182.6px;top:434.3px" width="14" height="14" viewBox="-7.0 -7.0 14 14"><path d="M-5.4 -2H3.4M1.6 -4L3.8 -2L1.6 0M5.4 2.4H-3.4M-1.6 .4L-3.8 2.4L-1.6 4.4M-2 5.4L2 -5.4" stroke="#111" stroke-width="1.1" fill="none"/></svg>
<div class="a" style="left:201px;top:433px;width:1px;height:16px;background:#9c9c9c;"></div>
<div class="a" style="left:202px;top:433px;width:1px;height:16px;background:#ececec;"></div>
<div class="a" style="left:206.4px;top:433px;width:17.599999999999994px;height:17px;background:#ececec;box-shadow:inset 1px 1px 0 #fafafa, inset -1px -1px 0 #c4c4c4"></div>
<svg class="a" style="left:208.0px;top:434.3px" width="14" height="14" viewBox="-7.0 -7.0 14 14"><path d="M-4.6 -5.6V5H5.6" stroke="#111" stroke-width="1.2" fill="none"/><path d="M-4.6 -4H5" stroke="#e03030" stroke-width="1"/><path d="M0 -2.6V2.6M-1.4 -1L0 -2.8L1.4 -1M-1.4 1L0 2.8L1.4 1" stroke="#3868d0" stroke-width=".9" fill="none"/></svg>
<div class="a" style="left:227px;top:433px;width:1px;height:16px;background:#9c9c9c;"></div>
<div class="a" style="left:228px;top:433px;width:1px;height:16px;background:#ececec;"></div>
<div class="a" style="left:231.4px;top:433px;width:16.599999999999994px;height:17px;background:#ececec;box-shadow:inset 1px 1px 0 #fafafa, inset -1px -1px 0 #c4c4c4"></div>
<svg class="a" style="left:233.0px;top:434.3px" width="14" height="14" viewBox="-7.0 -7.0 14 14"><path d="M-5 -5.6V5H5.6" stroke="#111" stroke-width="1.2" fill="none"/><path d="M-2 -5V5M1.6 -5V5M-5 -2H5M-5 1.6H5" stroke="#e04848" stroke-width=".8"/></svg>
<svg class="a" style="left:251.5px;top:434.3px" width="14" height="14" viewBox="-7.0 -7.0 14 14"><circle r="3" fill="none" stroke="#6898e8" stroke-width="2.2"/><path d="M0 -5.6V5.6M-5.6 0H5.6M-4 -4L4 4M4 -4L-4 4" stroke="#6898e8" stroke-width="1.5"/><circle r="1.4" fill="#d9d9d9"/></svg>
<div class="a" style="left:271.3px;top:433px;width:1px;height:16px;background:#9c9c9c;"></div>
<div class="a" style="left:272.3px;top:433px;width:1px;height:16px;background:#ececec;"></div>
<svg class="a" style="left:277.0px;top:434.3px" width="14" height="14" viewBox="-7.0 -7.0 14 14"><rect x="-5.6" y="-5.4" width="9" height="9" fill="#f0f8f0" stroke="#287828" stroke-width=".9"/><path d="M-3.6 -3.4L1.4 1.6M1.4 -3.4L-3.6 1.6" stroke="#287828" stroke-width="1.3"/><rect x="0" y="0" width="6" height="5.6" fill="#e8ecf8" stroke="#4060a8" stroke-width=".6"/><path d="M1.2 2H4.8M1.2 3.8H4.8" stroke="#4060a8" stroke-width=".6"/></svg>
<span class="t" style="left:294px;top:436.67px;font-size:8.9px;color:#1c1c1c;letter-spacing:-0.526px;">Export</span>
<svg class="a" style="left:321px;top:440px;" width="5" height="3" viewBox="0 0 5 3"><path d="M0 0H5L2.5 3z" fill="#222"/></svg>
<div class="a" style="left:331.5px;top:433px;width:1px;height:16px;background:#9c9c9c;"></div>
<div class="a" style="left:332.5px;top:433px;width:1px;height:16px;background:#ececec;"></div>
<svg class="a" style="left:336.8px;top:434.3px" width="14" height="14" viewBox="-7.0 -7.0 14 14"><circle r="5" fill="#58b858" stroke="#288028" stroke-width=".8"/><circle r="3.2" fill="#88d888"/><path d="M-3 5L0 6.4L3 5" stroke="#288028" stroke-width="1" fill="none"/></svg>
<span class="t" style="left:340.6px;top:439.31px;font-size:4.6px;color:#fff;letter-spacing:-0.070px;font-weight:bold;">ND</span>
<div class="a" style="left:356.8px;top:433px;width:1px;height:16px;background:#9c9c9c;"></div>
<div class="a" style="left:357.8px;top:433px;width:1px;height:16px;background:#ececec;"></div>
<svg class="a" style="left:362.0px;top:434.3px" width="14" height="14" viewBox="-7.0 -7.0 14 14"><path d="M-5 -4.6V4.6M5 -4.6V4.6" stroke="#3868d0" stroke-width="1"/><path d="M-4 0H4M-2.4 -1.6L-4 0L-2.4 1.6M2.4 -1.6L4 0L2.4 1.6" stroke="#e02838" stroke-width="1" fill="none"/></svg>
<svg class="a" style="left:382.0px;top:434.3px" width="14" height="14" viewBox="-7.0 -7.0 14 14"><path d="M-4.6 -5H4.6M-4.6 5H4.6" stroke="#3868d0" stroke-width="1"/><path d="M0 -4V4M-1.6 -2.4L0 -4L1.6 -2.4M-1.6 2.4L0 4L1.6 2.4" stroke="#e02838" stroke-width="1" fill="none"/></svg>
<svg class="a" style="left:402.0px;top:434.3px" width="14" height="14" viewBox="-7.0 -7.0 14 14"><path d="M4 -4L-5 1L5 3.6" stroke="#6890d8" stroke-width=".9" fill="none"/><path d="M1 -3.6C3 -1 3 2 1.6 4.6" stroke="#e02838" stroke-width=".9" fill="none"/></svg>
<svg class="a" style="left:420.8px;top:434.3px" width="14" height="14" viewBox="-7.0 -7.0 14 14"><path d="M4.6 -4L-5 0L4.6 3.6" stroke="#6890d8" stroke-width=".9" fill="none"/><path d="M2.6 -4.6V4.6" stroke="#e02838" stroke-width=".9" fill="none"/></svg>
<div class="a" style="left:439.4px;top:433px;width:1px;height:16px;background:#9c9c9c;"></div>
<div class="a" style="left:440.4px;top:433px;width:1px;height:16px;background:#ececec;"></div>
<svg class="a" style="left:445.0px;top:434.3px" width="14" height="14" viewBox="-7.0 -7.0 14 14"><path d="M-4.4 -4.4L4.4 4.4M4.4 -4.4L-4.4 4.4" stroke="#e02038" stroke-width="1.3"/></svg>
<svg class="a" style="left:464.6px;top:434.3px" width="14" height="14" viewBox="-7.0 -7.0 14 14"><rect x="0" y="-1" width="5" height="6" fill="#f0f0f0" stroke="#555" stroke-width=".6"/><path d="M-4.4 -4.4L3.4 3.4M3.4 -4.4L-4.4 3.4" stroke="#e02038" stroke-width="1.3"/><path d="M1 2H4M1 3.6H4" stroke="#555" stroke-width=".5"/></svg>
<svg class="a" style="left:14.5px;top:450.5px;overflow:hidden;" width="687.5" height="93.0" viewBox="0 0 687.5 93.0"><rect width="687.5" height="93.0" fill="#000"/><path d="M91.3 17.8V66.8M147.6 17.8V66.8M203.9 17.8V66.8M260.2 17.8V66.8M316.5 17.8V66.8M372.8 17.8V66.8M429.1 17.8V66.8M485.4 17.8V66.8M541.7 17.8V66.8M598.0 17.8V66.8M35.0 44.7H642.0M35.0 22.7H642.0" stroke="#4a4a4a" stroke-width="1"/><path d="M35.0 66.8L36.6 66.8L38.2 66.8L39.7 66.8L41.3 66.8L42.9 66.8L44.5 66.8L46.0 66.8L47.6 66.8L49.2 66.8L50.8 66.8L52.3 66.8L53.9 66.8L55.5 66.8L57.1 66.8L58.6 66.8L60.2 66.8L61.8 66.8L63.4 66.8L65.0 66.8L66.5 66.8L68.1 66.8L69.7 66.8L71.3 66.8L72.8 66.8L74.4 66.8L76.0 66.8L77.6 66.8L79.1 66.8L80.7 66.8L82.3 64.6L83.9 61.0L85.4 57.4L87.0 53.5L88.6 51.6L90.2 52.2L91.8 50.0L93.3 50.8L94.9 50.5L96.5 53.8L98.1 54.1L99.6 56.0L101.2 59.0L102.8 60.4L104.4 60.9L105.9 61.6L107.5 61.1L109.1 63.0L110.7 61.0L112.2 60.9L113.8 61.7L115.4 60.3L117.0 59.2L118.5 59.9L120.1 61.9L121.7 62.2L123.3 64.7L124.9 63.7L126.4 60.9L128.0 61.7L129.6 62.1L131.2 60.4L132.7 60.1L134.3 60.7L135.9 62.6L137.5 62.9L139.0 62.8L140.6 61.4L142.2 61.9L143.8 61.7L145.3 60.8L146.9 62.5L148.5 62.8L150.1 60.8L151.7 60.4L153.2 62.4L154.8 63.2L156.4 63.7L158.0 61.8L159.5 59.2L161.1 59.6L162.7 60.5L164.3 59.7L165.8 62.8L167.4 62.4L169.0 61.0L170.6 62.4L172.1 62.4L173.7 62.5L175.3 60.8L176.9 58.8L178.5 62.7L180.0 60.1L181.6 60.7L183.2 61.0L184.8 61.9L186.3 61.4L187.9 62.0L189.5 61.2L191.1 61.1L192.6 62.4L194.2 59.4L195.8 61.1L197.4 63.3L198.9 62.6L200.5 62.9L202.1 63.1L203.7 62.6L205.3 61.1L206.8 60.3L208.4 60.2L210.0 61.1L211.6 63.5L213.1 63.3L214.7 64.0L216.3 62.5L217.9 61.0L219.4 60.6L221.0 59.9L222.6 59.4L224.2 61.7L225.7 59.7L227.3 61.1L228.9 64.1L230.5 64.7L232.0 64.7L233.6 61.3L235.2 62.6L236.8 62.5L238.4 60.1L239.9 61.4L241.5 59.7L243.1 57.0L244.7 53.6L246.2 52.1L247.8 50.8L249.4 49.3L251.0 50.2L252.5 52.1L254.1 55.5L255.7 59.7L257.3 62.8L258.8 66.4L260.4 66.8L262.0 66.8L263.6 66.8L265.2 66.8L266.7 66.8L268.3 66.8L269.9 66.8L271.5 66.8L273.0 66.8L274.6 66.8L276.2 66.8L277.8 66.8L279.3 66.8L280.9 66.8L282.5 66.8L284.1 66.8L285.6 66.8L287.2 66.8L288.8 66.8L290.4 66.8L292.0 66.8L293.5 66.8L295.1 66.7L296.7 61.2L298.3 55.1L299.8 49.8L301.4 43.8L303.0 37.4L304.6 31.6L306.1 26.3L307.7 25.4L309.3 28.6L310.9 25.8L312.4 26.8L314.0 28.2L315.6 28.7L317.2 29.3L318.8 24.6L320.3 28.1L321.9 24.0L323.5 23.1L325.1 25.1L326.6 27.3L328.2 24.3L329.8 24.4L331.4 26.2L332.9 27.6L334.5 28.5L336.1 28.7L337.7 29.2L339.2 26.6L340.8 27.3L342.4 27.9L344.0 27.8L345.6 24.7L347.1 26.3L348.7 25.4L350.3 26.5L351.9 24.3L353.4 24.8L355.0 35.7L356.6 42.4L358.2 44.1L359.7 36.6L361.3 31.3L362.9 27.3L364.5 28.0L366.0 25.5L367.6 24.7L369.2 24.2L370.8 27.3L372.3 24.4L373.9 30.2L375.5 31.6L377.1 28.1L378.7 33.4L380.2 29.9L381.8 28.2L383.4 27.7L385.0 23.4L386.5 27.4L388.1 24.3L389.7 25.2L391.3 23.8L392.8 26.5L394.4 26.7L396.0 23.1L397.6 20.8L399.1 21.8L400.7 20.5L402.3 20.7L403.9 23.7L405.5 22.1L407.0 23.8L408.6 24.1L410.2 24.0L411.8 20.8L413.3 21.1L414.9 21.0L416.5 22.9L418.1 21.8L419.6 21.1L421.2 28.6L422.8 34.8L424.4 41.9L425.9 48.6L427.5 54.8L429.1 60.2L430.7 65.5L432.3 65.6L433.8 66.1L435.4 66.4L437.0 66.5L438.6 66.8L440.1 66.8L441.7 66.8L443.3 66.8L444.9 66.8L446.4 66.8L448.0 66.8L449.6 66.8L451.2 66.8L452.7 66.8L454.3 66.8L455.9 66.8L457.5 66.8L459.1 66.8L460.6 66.8L462.2 66.8L463.8 66.8L465.4 66.8L466.9 66.8L468.5 66.8L470.1 66.8L471.7 66.8L473.2 66.8L474.8 66.8L476.4 66.8L478.0 66.8L479.5 66.8L481.1 66.8L482.7 66.8L484.3 66.8L485.9 66.8L487.4 66.8L489.0 66.8L490.6 66.8L492.2 66.8L493.7 66.8L495.3 66.8L496.9 66.8L498.5 66.8L500.0 66.8L501.6 66.8L503.2 66.8L504.8 66.8L506.3 66.8L507.9 66.8L509.5 66.8L511.1 66.8L512.6 66.8L514.2 66.8L515.8 66.8L517.4 66.8L519.0 66.8L520.5 66.8L522.1 66.8L523.7 66.8L525.3 66.8L526.8 66.8L528.4 66.8L530.0 66.8L531.6 66.8L533.1 66.8L534.7 66.8L536.3 66.8L537.9 66.8L539.4 66.8L541.0 66.8L542.6 66.8L544.2 66.8L545.8 66.8L547.3 66.8L548.9 66.8L550.5 66.8L552.1 66.8L553.6 66.8L555.2 66.8L556.8 66.8L558.4 66.8L559.9 66.8L561.5 66.8L563.1 66.8L564.7 66.8L566.2 66.8L567.8 66.8L569.4 66.8L571.0 66.8L572.6 66.8L574.1 66.8L575.7 66.8L577.3 66.8L578.9 66.8L580.4 66.8L582.0 66.8L583.6 66.8L585.2 66.8L586.7 66.8L588.3 66.8L589.9 66.8L591.5 66.8L593.0 66.8L594.6 66.8L596.2 66.8L597.8 66.8L599.4 66.8L600.9 66.8L602.5 66.8L604.1 66.8L605.7 66.8L607.2 66.8L608.8 66.8L610.4 66.8L612.0 66.8L613.5 66.8L615.1 66.8L616.7 66.8L618.3 66.8L619.8 66.8L621.4 66.8L623.0 66.8L624.6 66.8L626.2 66.8L627.7 66.8L629.3 66.8L630.9 66.8L632.5 66.8L634.0 66.8L635.6 66.8L637.2 66.8L638.8 66.8L640.3 66.8" stroke="#30e830" stroke-width="1.1" fill="none" stroke-linejoin="round"/><path d="M35.0 66.8L36.6 66.8L38.2 66.8L39.7 66.8L41.3 66.8L42.9 66.8L44.5 66.8L46.0 66.8L47.6 66.8L49.2 66.8L50.8 66.8L52.3 66.8L53.9 66.8L55.5 66.8L57.1 66.8L58.6 66.8L60.2 66.8L61.8 66.8L63.4 66.8L65.0 66.8L66.5 66.8L68.1 66.8L69.7 66.8L71.3 66.8L72.8 66.8L74.4 66.8L76.0 66.8L77.6 66.8L79.1 66.8L80.7 66.8L82.3 66.1L83.9 65.1L85.4 63.4L87.0 61.7L88.6 60.8L90.2 60.1L91.8 58.4L93.3 58.9L94.9 59.3L96.5 59.4L98.1 59.9L99.6 60.2L101.2 61.1L102.8 60.6L104.4 60.9L105.9 62.5L107.5 61.2L109.1 61.6L110.7 62.6L112.2 62.5L113.8 62.6L115.4 61.3L117.0 62.2L118.5 61.0L120.1 62.0L121.7 60.4L123.3 60.2L124.9 61.5L126.4 61.4L128.0 60.7L129.6 61.5L131.2 62.4L132.7 63.3L134.3 63.1L135.9 62.0L137.5 63.1L139.0 60.9L140.6 62.3L142.2 60.3L143.8 61.8L145.3 60.1L146.9 60.9L148.5 61.8L150.1 62.0L151.7 62.0L153.2 62.3L154.8 63.1L156.4 63.3L158.0 62.3L159.5 60.9L161.1 61.4L162.7 62.6L164.3 60.5L165.8 60.7L167.4 60.4L169.0 62.5L170.6 61.4L172.1 63.5L173.7 62.1L175.3 63.2L176.9 63.3L178.5 61.4L180.0 63.1L181.6 61.7L183.2 60.6L184.8 62.0L186.3 62.1L187.9 60.4L189.5 61.8L191.1 61.4L192.6 63.5L194.2 62.9L195.8 63.5L197.4 62.1L198.9 63.5L200.5 60.9L202.1 63.1L203.7 60.9L205.3 62.6L206.8 61.9L208.4 60.5L210.0 62.5L211.6 62.7L213.1 61.7L214.7 62.8L216.3 63.8L217.9 61.3L219.4 63.4L221.0 63.4L222.6 62.3L224.2 61.3L225.7 60.7L227.3 62.3L228.9 61.8L230.5 62.8L232.0 62.0L233.6 61.4L235.2 61.8L236.8 61.5L238.4 61.9L239.9 61.5L241.5 61.7L243.1 62.0L244.7 60.1L246.2 57.4L247.8 56.1L249.4 55.8L251.0 55.0L252.5 54.1L254.1 57.4L255.7 60.1L257.3 63.4L258.8 66.3L260.4 66.8L262.0 66.8L263.6 66.8L265.2 66.8L266.7 66.8L268.3 66.8L269.9 66.8L271.5 66.8L273.0 66.8L274.6 66.8L276.2 66.8L277.8 66.8L279.3 66.8L280.9 66.8L282.5 66.8L284.1 66.8L285.6 66.8L287.2 66.8L288.8 66.8L290.4 66.8L292.0 66.8L293.5 66.8L295.1 66.8L296.7 66.8L298.3 66.8L299.8 64.3L301.4 61.1L303.0 58.6L304.6 55.5L306.1 52.2L307.7 49.4L309.3 45.8L310.9 43.2L312.4 43.4L314.0 43.3L315.6 43.2L317.2 43.2L318.8 42.7L320.3 42.8L321.9 43.1L323.5 42.5L325.1 43.2L326.6 42.1L328.2 42.1L329.8 42.4L331.4 42.9L332.9 42.7L334.5 42.6L336.1 43.5L337.7 42.9L339.2 42.7L340.8 43.3L342.4 43.4L344.0 42.3L345.6 43.0L347.1 42.7L348.7 42.1L350.3 42.6L351.9 43.1L353.4 42.0L355.0 46.6L356.6 50.6L358.2 50.7L359.7 49.7L361.3 47.7L362.9 45.3L364.5 45.3L366.0 46.7L367.6 45.7L369.2 45.8L370.8 45.7L372.3 46.3L373.9 45.4L375.5 46.6L377.1 46.1L378.7 45.9L380.2 44.7L381.8 46.6L383.4 45.1L385.0 46.3L386.5 45.5L388.1 42.9L389.7 42.8L391.3 42.4L392.8 42.9L394.4 43.3L396.0 43.3L397.6 43.4L399.1 42.2L400.7 42.5L402.3 42.1L403.9 42.5L405.5 43.5L407.0 43.0L408.6 43.8L410.2 44.8L411.8 46.0L413.3 47.1L414.9 47.8L416.5 48.3L418.1 49.9L419.6 50.5L421.2 51.4L422.8 51.7L424.4 53.5L425.9 55.2L427.5 57.2L429.1 59.5L430.7 61.4L432.3 63.0L433.8 65.1L435.4 66.0L437.0 66.1L438.6 66.3L440.1 66.6L441.7 66.8L443.3 66.8L444.9 66.8L446.4 66.8L448.0 66.8L449.6 66.8L451.2 66.8L452.7 66.8L454.3 66.8L455.9 66.8L457.5 66.8L459.1 66.8L460.6 66.8L462.2 66.8L463.8 66.8L465.4 66.8L466.9 66.8L468.5 66.8L470.1 66.8L471.7 66.8L473.2 66.8L474.8 66.8L476.4 66.8L478.0 66.8L479.5 66.8L481.1 66.8L482.7 66.8L484.3 66.8L485.9 66.8L487.4 66.8L489.0 66.8L490.6 66.8L492.2 66.8L493.7 66.8L495.3 66.8L496.9 66.8L498.5 66.8L500.0 66.8L501.6 66.8L503.2 66.8L504.8 66.8L506.3 66.8L507.9 66.8L509.5 66.8L511.1 66.8L512.6 66.8L514.2 66.8L515.8 66.8L517.4 66.8L519.0 66.8L520.5 66.8L522.1 66.8L523.7 66.8L525.3 66.8L526.8 66.8L528.4 66.8L530.0 66.8L531.6 66.8L533.1 66.8L534.7 66.8L536.3 66.8L537.9 66.8L539.4 66.8L541.0 66.8L542.6 66.8L544.2 66.8L545.8 66.8L547.3 66.8L548.9 66.8L550.5 66.8L552.1 66.8L553.6 66.8L555.2 66.8L556.8 66.8L558.4 66.8L559.9 66.8L561.5 66.8L563.1 66.8L564.7 66.8L566.2 66.8L567.8 66.8L569.4 66.8L571.0 66.8L572.6 66.8L574.1 66.8L575.7 66.8L577.3 66.8L578.9 66.8L580.4 66.8L582.0 66.8L583.6 66.8L585.2 66.8L586.7 66.8L588.3 66.8L589.9 66.8L591.5 66.8L593.0 66.8L594.6 66.8L596.2 66.8L597.8 66.8L599.4 66.8L600.9 66.8L602.5 66.8L604.1 66.8L605.7 66.8L607.2 66.8L608.8 66.8L610.4 66.8L612.0 66.8L613.5 66.8L615.1 66.8L616.7 66.8L618.3 66.8L619.8 66.8L621.4 66.8L623.0 66.8L624.6 66.8L626.2 66.8L627.7 66.8L629.3 66.8L630.9 66.8L632.5 66.8L634.0 66.8L635.6 66.8L637.2 66.8L638.8 66.8L640.3 66.8" stroke="#f02020" stroke-width="1.2" fill="none" stroke-linejoin="round"/><path d="M35.0 66.6L36.6 66.6L38.2 66.6L39.7 66.6L41.3 66.6L42.9 66.6L44.5 66.6L46.0 66.6L47.6 66.6L49.2 66.6L50.8 66.6L52.3 66.6L53.9 66.6L55.5 66.6L57.1 66.6L58.6 66.6L60.2 66.6L61.8 66.6L63.4 66.6L65.0 66.6L66.5 66.6L68.1 66.6L69.7 66.6L71.3 66.6L72.8 66.6L74.4 66.6L76.0 66.6L77.6 66.6L79.1 66.6L80.7 66.6L82.3 65.8L83.9 64.7L85.4 64.1L87.0 62.8L88.6 62.1L90.2 60.7L91.8 61.2L93.3 62.3L94.9 62.7L96.5 63.1L98.1 62.8L99.6 63.7L101.2 64.0L102.8 64.7L104.4 65.0L105.9 65.6L107.5 65.6L109.1 65.4L110.7 65.4L112.2 65.2L113.8 65.3L115.4 65.1L117.0 65.2L118.5 65.1L120.1 65.3L121.7 65.7L123.3 65.2L124.9 65.1L126.4 65.2L128.0 65.4L129.6 65.3L131.2 65.7L132.7 65.2L134.3 65.4L135.9 65.6L137.5 65.8L139.0 65.2L140.6 65.1L142.2 65.8L143.8 65.2L145.3 65.5L146.9 65.8L148.5 65.6L150.1 65.3L151.7 65.2L153.2 65.8L154.8 65.4L156.4 65.8L158.0 65.3L159.5 65.6L161.1 65.2L162.7 65.1L164.3 65.5L165.8 65.1L167.4 65.6L169.0 65.8L170.6 65.4L172.1 65.8L173.7 65.7L175.3 65.6L176.9 65.4L178.5 65.7L180.0 65.8L181.6 65.2L183.2 65.6L184.8 65.1L186.3 65.2L187.9 65.6L189.5 65.5L191.1 65.5L192.6 65.4L194.2 65.4L195.8 65.4L197.4 65.4L198.9 65.1L200.5 65.5L202.1 65.5L203.7 65.3L205.3 65.7L206.8 65.6L208.4 65.1L210.0 65.5L211.6 65.4L213.1 65.9L214.7 65.5L216.3 65.4L217.9 65.9L219.4 65.4L221.0 65.4L222.6 65.8L224.2 65.4L225.7 65.5L227.3 65.3L228.9 65.6L230.5 65.3L232.0 65.3L233.6 65.9L235.2 65.8L236.8 65.3L238.4 65.1L239.9 65.7L241.5 65.5L243.1 63.9L244.7 62.5L246.2 60.7L247.8 59.0L249.4 58.3L251.0 57.8L252.5 58.4L254.1 59.5L255.7 61.5L257.3 64.4L258.8 66.2L260.4 66.6L262.0 66.6L263.6 66.6L265.2 66.6L266.7 66.6L268.3 66.6L269.9 66.6L271.5 66.6L273.0 66.6L274.6 66.6L276.2 66.6L277.8 66.6L279.3 66.6L280.9 66.6L282.5 66.6L284.1 66.6L285.6 66.6L287.2 66.6L288.8 66.6L290.4 66.6L292.0 66.6L293.5 66.6L295.1 66.6L296.7 64.5L298.3 57.8L299.8 51.8L301.4 45.1L303.0 38.0L304.6 31.5L306.1 24.8L307.7 20.5L309.3 21.2L310.9 20.7L312.4 19.1L314.0 20.8L315.6 20.5L317.2 26.3L318.8 26.7L320.3 27.4L321.9 25.6L323.5 29.9L325.1 30.8L326.6 26.1L328.2 26.0L329.8 24.8L331.4 26.8L332.9 23.8L334.5 23.7L336.1 27.3L337.7 25.3L339.2 25.5L340.8 27.0L342.4 28.2L344.0 29.5L345.6 29.0L347.1 29.0L348.7 29.1L350.3 25.9L351.9 27.0L353.4 24.3L355.0 36.0L356.6 41.5L358.2 44.2L359.7 37.1L361.3 30.6L362.9 23.0L364.5 24.5L366.0 27.3L367.6 23.7L369.2 26.5L370.8 28.5L372.3 32.3L373.9 37.8L375.5 41.1L377.1 35.6L378.7 34.7L380.2 35.9L381.8 40.0L383.4 41.3L385.0 41.5L386.5 34.9L388.1 32.1L389.7 27.9L391.3 20.8L392.8 19.7L394.4 22.2L396.0 19.8L397.6 19.3L399.1 19.7L400.7 19.7L402.3 22.9L403.9 20.4L405.5 19.5L407.0 22.7L408.6 21.8L410.2 21.9L411.8 20.8L413.3 21.2L414.9 21.0L416.5 19.8L418.1 22.9L419.6 25.3L421.2 32.0L422.8 38.8L424.4 45.8L425.9 51.0L427.5 58.0L429.1 65.7L430.7 65.7L432.3 66.0L433.8 66.2L435.4 66.3L437.0 66.4L438.6 66.6L440.1 66.6L441.7 66.6L443.3 66.6L444.9 66.6L446.4 66.6L448.0 66.6L449.6 66.6L451.2 66.6L452.7 66.6L454.3 66.6L455.9 66.6L457.5 66.6L459.1 66.6L460.6 66.6L462.2 66.6L463.8 66.6L465.4 66.6L466.9 66.6L468.5 66.6L470.1 66.6L471.7 66.6L473.2 66.6L474.8 66.6L476.4 66.6L478.0 66.6L479.5 66.6L481.1 66.6L482.7 66.6L484.3 66.6L485.9 66.6L487.4 66.6L489.0 66.6L490.6 66.6L492.2 66.6L493.7 66.6L495.3 66.6L496.9 66.6L498.5 66.6L500.0 66.6L501.6 66.6L503.2 66.6L504.8 66.6L506.3 66.6L507.9 66.6L509.5 66.6L511.1 66.6L512.6 66.6L514.2 66.6L515.8 66.6L517.4 66.6L519.0 66.6L520.5 66.6L522.1 66.6L523.7 66.6L525.3 66.6L526.8 66.6L528.4 66.6L530.0 66.6L531.6 66.6L533.1 66.6L534.7 66.6L536.3 66.6L537.9 66.6L539.4 66.6L541.0 66.6L542.6 66.6L544.2 66.6L545.8 66.6L547.3 66.6L548.9 66.6L550.5 66.6L552.1 66.6L553.6 66.6L555.2 66.6L556.8 66.6L558.4 66.6L559.9 66.6L561.5 66.6L563.1 66.6L564.7 66.6L566.2 66.6L567.8 66.6L569.4 66.6L571.0 66.6L572.6 66.6L574.1 66.6L575.7 66.6L577.3 66.6L578.9 66.6L580.4 66.6L582.0 66.6L583.6 66.6L585.2 66.6L586.7 66.6L588.3 66.6L589.9 66.6L591.5 66.6L593.0 66.6L594.6 66.6L596.2 66.6L597.8 66.6L599.4 66.6L600.9 66.6L602.5 66.6L604.1 66.6L605.7 66.6L607.2 66.6L608.8 66.6L610.4 66.6L612.0 66.6L613.5 66.6L615.1 66.6L616.7 66.6L618.3 66.6L619.8 66.6L621.4 66.6L623.0 66.6L624.6 66.6L626.2 66.6L627.7 66.6L629.3 66.6L630.9 66.6L632.5 66.6L634.0 66.6L635.6 66.6L637.2 66.6L638.8 66.6L640.3 66.6" stroke="#2868f0" stroke-width="1.3" fill="none" stroke-linejoin="round"/><path d="M35.0 17.6V67.3M31.0 55.8H35.0M31.0 44.7H35.0M31.0 33.7H35.0M31.0 22.7H35.0" stroke="#f4f4f4" stroke-width="1"/><path d="M63.2 66.8v3M91.3 66.8v3.5M119.4 66.8v3M147.6 66.8v3.5M175.8 66.8v3M203.9 66.8v3.5M232.1 66.8v3M260.2 66.8v3.5M288.4 66.8v3M316.5 66.8v3.5M344.6 66.8v3M372.8 66.8v3.5M400.9 66.8v3M429.1 66.8v3.5M457.2 66.8v3M485.4 66.8v3.5M513.5 66.8v3M541.7 66.8v3.5M569.9 66.8v3M598.0 66.8v3.5M626.1 66.8v3" stroke="#e8e8e8" stroke-width="1"/><path d="M406.0 39.0V66.8" stroke="#fff" stroke-width="1" stroke-dasharray="2 1.6"/></svg>
<span class="t" style="left:18.4px;top:456.97px;font-size:7.6px;color:#f0f0f0;letter-spacing:0.135px;">Intensity</span>
<span class="t" style="left:25.7px;top:469.97px;font-size:7.6px;color:#f0f0f0;letter-spacing:0.023px;">2000</span>
<span class="t" style="left:25.7px;top:492.07px;font-size:7.6px;color:#f0f0f0;letter-spacing:0.023px;">1000</span>
<span class="t" style="left:47.4px;top:522.87px;font-size:7.6px;color:#f0f0f0;letter-spacing:-0.034px;">0</span>
<span class="t" style="left:95.5px;top:522.87px;font-size:7.6px;color:#f0f0f0;letter-spacing:0.317px;">0,010</span>
<span class="t" style="left:151.79999999999998px;top:522.87px;font-size:7.6px;color:#f0f0f0;letter-spacing:0.317px;">0,020</span>
<span class="t" style="left:208.09999999999997px;top:522.87px;font-size:7.6px;color:#f0f0f0;letter-spacing:0.317px;">0,030</span>
<span class="t" style="left:264.4px;top:522.87px;font-size:7.6px;color:#f0f0f0;letter-spacing:0.317px;">0,040</span>
<span class="t" style="left:320.7px;top:522.87px;font-size:7.6px;color:#f0f0f0;letter-spacing:0.317px;">0,050</span>
<span class="t" style="left:376.99999999999994px;top:522.87px;font-size:7.6px;color:#f0f0f0;letter-spacing:0.317px;">0,060</span>
<span class="t" style="left:433.29999999999995px;top:522.87px;font-size:7.6px;color:#f0f0f0;letter-spacing:0.317px;">0,070</span>
<span class="t" style="left:489.59999999999997px;top:522.87px;font-size:7.6px;color:#f0f0f0;letter-spacing:0.317px;">0,080</span>
<span class="t" style="left:545.9000000000001px;top:522.87px;font-size:7.6px;color:#f0f0f0;letter-spacing:0.317px;">0,090</span>
<span class="t" style="left:602.2px;top:522.87px;font-size:7.6px;color:#f0f0f0;letter-spacing:0.317px;">0,100</span>
<span class="t" style="left:676.5px;top:532.91px;font-size:6.6px;color:#e8e8e8;letter-spacing:0.211px;">[mm]</span>
<div class="a" style="left:420.5px;top:452.6px;width:64.5px;height:34.8px;background:#ffffe1;"></div>
<span class="t" style="left:422.5px;top:455.74px;font-size:7.4px;color:#78e838;letter-spacing:0.111px;font-weight:bold;">FITC: 2009</span>
<span class="t" style="left:422.5px;top:466.74px;font-size:7.4px;color:#f03030;letter-spacing:0.199px;font-weight:bold;">TexRed: 1094</span>
<span class="t" style="left:422.5px;top:477.04px;font-size:7.4px;color:#3070e8;letter-spacing:0.188px;font-weight:bold;">DAPI: 2087</span>
<svg class="a" style="left:411.5px;top:484.5px;" width="16" height="7" viewBox="0 0 16 7"><path d="M1 3.5H15M4 .8L1 3.5L4 6.2M12 .8L15 3.5L12 6.2" stroke="#111" stroke-width="2.6" fill="none"/><path d="M1 3.5H15M4 .8L1 3.5L4 6.2M12 .8L15 3.5L12 6.2" stroke="#fff" stroke-width="1.1" fill="none"/></svg>
<div class="a" style="left:702px;top:450.5px;width:12.8px;height:93px;background:#d9d9d9;"></div>
<svg class="a" style="left:701.3px;top:451.5px" width="12" height="12" viewBox="-6.0 -6.0 12 12"><circle cx="-.6" cy="-.6" r="3.8" fill="#c8dcfc" stroke="#4878c8" stroke-width="1"/><circle cx="-.6" cy="-.6" r="1.8" fill="#2860c8"/><path d="M2.6 2.6L5 5" stroke="#e0a838" stroke-width="2"/></svg>
<svg class="a" style="left:701.3px;top:464.5px" width="12" height="12" viewBox="-6.0 -6.0 12 12"><circle cx="-.6" cy="-.6" r="3.8" fill="#e4e4e4" stroke="#b4b4b4" stroke-width="1"/><path d="M-2.6 -.6H1.4" stroke="#b4b4b4" stroke-width="1"/><path d="M2.6 2.6L5 5" stroke="#c0c0c0" stroke-width="2"/></svg>
<div class="a" style="left:703.5px;top:481px;width:10px;height:11.5px;background:#fafafa;box-shadow:inset 0 0 0 1px #222"></div>
<svg class="a" style="left:705.5px;top:482.5px;" width="6" height="8.5" viewBox="0 0 6 8.5"><path d="M0 0V8.5M6 0V8.5M3 .6V7.9M1.6 2.2L3 .6L4.4 2.2M1.6 6.3L3 7.9L4.4 6.3" stroke="#111" stroke-width=".9" fill="none"/></svg>
<div class="a" style="left:703px;top:493px;width:11px;height:12px;background:#e4e4e4;box-shadow:inset 1px 1px 0 #fafafa, inset -1px -1px 0 #a8a8a8"></div>
<svg class="a" style="left:706px;top:497.5px;" width="5" height="3" viewBox="0 0 5 3"><path d="M0 3H5L2.5 0z" fill="#a8a8a8"/></svg>
<div class="a" style="left:703px;top:505px;width:11px;height:26px;background:#fcfcfc;"></div>
<div class="a" style="left:703px;top:531px;width:11px;height:12px;background:#e4e4e4;box-shadow:inset 1px 1px 0 #fafafa, inset -1px -1px 0 #a8a8a8"></div>
<svg class="a" style="left:706px;top:535.5px;" width="5" height="3" viewBox="0 0 5 3"><path d="M0 0H5L2.5 3z" fill="#a8a8a8"/></svg>
<div class="a" style="left:14px;top:543.5px;width:700.8px;height:12.5px;background:#d9d9d9;"></div>
<div class="a" style="left:15px;top:544.5px;width:643px;height:11px;background:#fcfcfc;"></div>
<div class="a" style="left:15px;top:544.5px;width:11px;height:11px;background:#e4e4e4;box-shadow:inset 1px 1px 0 #fafafa, inset -1px -1px 0 #b0b0b0"></div>
<svg class="a" style="left:18.5px;top:547.5px;" width="3" height="5" viewBox="0 0 3 5"><path d="M3 0V5L0 2.5z" fill="#a8a8a8"/></svg>
<div class="a" style="left:647px;top:544.5px;width:11px;height:11px;background:#e4e4e4;box-shadow:inset 1px 1px 0 #fafafa, inset -1px -1px 0 #b0b0b0"></div>
<svg class="a" style="left:651.5px;top:547.5px;" width="3" height="5" viewBox="0 0 3 5"><path d="M0 0V5L3 2.5z" fill="#a8a8a8"/></svg>
<svg class="a" style="left:659.5px;top:544.0px" width="12" height="12" viewBox="-6.0 -6.0 12 12"><circle cx="-.6" cy="-.6" r="3.6" fill="#e4e4e4" stroke="#b4b4b4" stroke-width="1"/><path d="M-2.6 -.6H1.4" stroke="#b4b4b4" stroke-width="1"/><path d="M2.6 2.6L5 5" stroke="#c0c0c0" stroke-width="2"/></svg>
<svg class="a" style="left:673.5px;top:544.0px" width="12" height="12" viewBox="-6.0 -6.0 12 12"><circle cx="-.6" cy="-.6" r="3.6" fill="#c8dcfc" stroke="#4878c8" stroke-width="1"/><path d="M-2.6 -.6H1.4M-.6 -2.6V1.4" stroke="#2860c8" stroke-width="1.1"/><path d="M2.6 2.6L5 5" stroke="#e0a838" stroke-width="2"/></svg>
<div class="a" style="left:688.5px;top:545px;width:11.5px;height:10.5px;background:#fafafa;box-shadow:inset 0 0 0 1px #222"></div>
<svg class="a" style="left:690px;top:547px;" width="8.5" height="6.5" viewBox="0 0 8.5 6.5"><path d="M0 0V6.5M8.5 0V6.5M.6 3.25H7.9" stroke="#111" stroke-width="1.6" fill="none"/></svg>
<div class="a" style="left:702.5px;top:545px;width:11.5px;height:10.5px;background:#fafafa;box-shadow:inset 0 0 0 1px #222"></div>
<svg class="a" style="left:704px;top:546.5px;" width="8.5" height="7.5" viewBox="0 0 8.5 7.5"><path d="M1 1L7.5 6.5M7.5 1L1 6.5" stroke="#111" stroke-width="1"/><path d="M0 2.4V0H2.4M6.1 0H8.5V2.4M8.5 5.1V7.5H6.1M2.4 7.5H0V5.1" stroke="#111" stroke-width="1.2" fill="none"/></svg>
<div class="a" style="left:14px;top:556px;width:700.8px;height:16px;background:#d9d9d9;"></div>
<svg class="a" style="left:14px;top:557px;" width="135" height="14" viewBox="0 0 135 14"><path d="M42 .5H125.500L119.500 12H42z" fill="#e2e2e2"/><path d="M63 1L66.800 6.200L63 11.500" stroke="#8c8c8c" stroke-width=".9" fill="none"/><path d="M125.500 .5L119.500 12" stroke="#555" stroke-width=".9" fill="none"/><path d="M1.500 .5L7 12.500H38L43.500 .5" fill="#ececec" stroke="#222" stroke-width="1.1"/></svg>
<span class="t" style="left:24.6px;top:559.75px;font-size:8.8px;color:#111;letter-spacing:-0.581px;font-weight:bold;">Graph</span>
<span class="t" style="left:60px;top:560.94px;font-size:7.4px;color:#222;letter-spacing:-0.156px;">Data</span>
<span class="t" style="left:87.7px;top:560.94px;font-size:7.4px;color:#222;letter-spacing:-0.263px;">Measurement</span>
<div class="a" style="left:145.5px;top:557.5px;width:186px;height:13px;background:#d9d9d9;box-shadow:inset 1px 1px 0 #a4a4a4, inset -1px -1px 0 #f6f6f6"></div>
<div class="a" style="left:333px;top:557.5px;width:379.5px;height:13px;background:#d9d9d9;box-shadow:inset 1px 1px 0 #a4a4a4, inset -1px -1px 0 #f6f6f6"></div>
<span class="t" style="left:149.5px;top:560.27px;font-size:8.9px;color:#222;letter-spacing:-0.350px;">ZoomX: 1.0, ZoomY: 1.0</span>
<span class="t" style="left:337.5px;top:560.27px;font-size:8.9px;color:#222;letter-spacing:-0.278px;">1.profile point [288, 256]</span>
<div class="a" style="left:-8px;top:572px;width:734px;height:27px;background:#d9d9d9;"></div>
<div class="a" style="left:0px;top:571.5px;width:718px;height:1px;background:#f2f2f2;"></div>
<div class="a" style="left:-8px;top:586px;width:734px;height:2px;background:#ececec;"></div>
<div class="a" style="left:-8px;top:588px;width:734px;height:1.6px;background:#8888b8;"></div>
<div class="a" style="left:-8px;top:589.6px;width:734px;height:10px;background:#d0d0dc;"></div>
<svg class="a" style="left:0px;top:572.5px;" width="260" height="13.5" viewBox="0 0 260 13.5"><path d="M-4 0H40L44.5 6.5L40 13H-4z" fill="#b9d3ee" stroke="#7890b0" stroke-width=".7"/><path d="M42 0H103L107.500 6.5L103 13H42L46.5 6.5z" fill="#b9d3ee" stroke="#7890b0" stroke-width=".7"/><path d="M105 0H156L160.5 6.5L156 13H105L109.5 6.5z" fill="#b9d3ee" stroke="#7890b0" stroke-width=".7"/><path d="M158 1H255L249.500 12.500H158L162.500 6.500z" fill="#3f87d2" stroke="#3070b8" stroke-width=".6"/></svg>
<span class="t" style="left:3.5px;top:575.74px;font-size:7.4px;color:#1c2c48;letter-spacing:-0.263px;">Full Screen</span>
<span class="t" style="left:50px;top:575.74px;font-size:7.4px;color:#1c2c48;letter-spacing:-0.243px;">Docked Controls</span>
<span class="t" style="left:112px;top:575.74px;font-size:7.4px;color:#1c2c48;letter-spacing:-0.199px;">Measurement</span>
<span class="t" style="left:166px;top:575.57px;font-size:7.6px;color:#fff;letter-spacing:0.316px;font-weight:bold;">Docked Controls(1)*</span>
<div class="a" style="left:256px;top:573.5px;width:82px;height:12.5px;background:#d9d9d9;box-shadow:inset 1px 1px 0 #a4a4a4, inset -1px -1px 0 #f6f6f6"></div>
<svg class="a" style="left:260.0px;top:575.0px" width="10" height="10" viewBox="-5.0 -5.0 10 10"><rect x="-4.6" y="-3" width="6" height="5" fill="#7090b0" stroke="#405870" stroke-width=".5"/><path d="M1.6 -1.6L4.6 -3.6V3L1.6 1.2z" fill="#58a058"/><path d="M-4 -4.6L-2 -3M0 -4.6L-1 -3" stroke="#405870" stroke-width=".7"/></svg>
<span class="t" style="left:275px;top:575.47px;font-size:8.9px;color:#222;letter-spacing:-0.869px;">Mono Sim</span>
<div class="a" style="left:340px;top:573.5px;width:204px;height:12.5px;background:#d9d9d9;box-shadow:inset 1px 1px 0 #a4a4a4, inset -1px -1px 0 #f6f6f6"></div>
<span class="t" style="left:342.5px;top:575.47px;font-size:8.9px;color:#222;letter-spacing:-0.424px;">Profile_SetAutoScale(1);</span>
<div class="a" style="left:546px;top:573.5px;width:116px;height:12.5px;background:#d9d9d9;box-shadow:inset 1px 1px 0 #a4a4a4, inset -1px -1px 0 #f6f6f6"></div>
<span class="t" style="left:548px;top:575.47px;font-size:8.9px;color:#2030d8;letter-spacing:0.234px;font-weight:bold;">XY=[7.804, 3.799]mm, Z=</span>
<div class="a" style="left:662px;top:573.5px;width:50.5px;height:12.5px;background:#d9d9d9;box-shadow:inset 1px 1px 0 #a4a4a4, inset -1px -1px 0 #f6f6f6"></div>
<div class="a" style="left:714px;top:573px;width:1px;height:13px;background:#888;"></div>
</div></div></body></html>
